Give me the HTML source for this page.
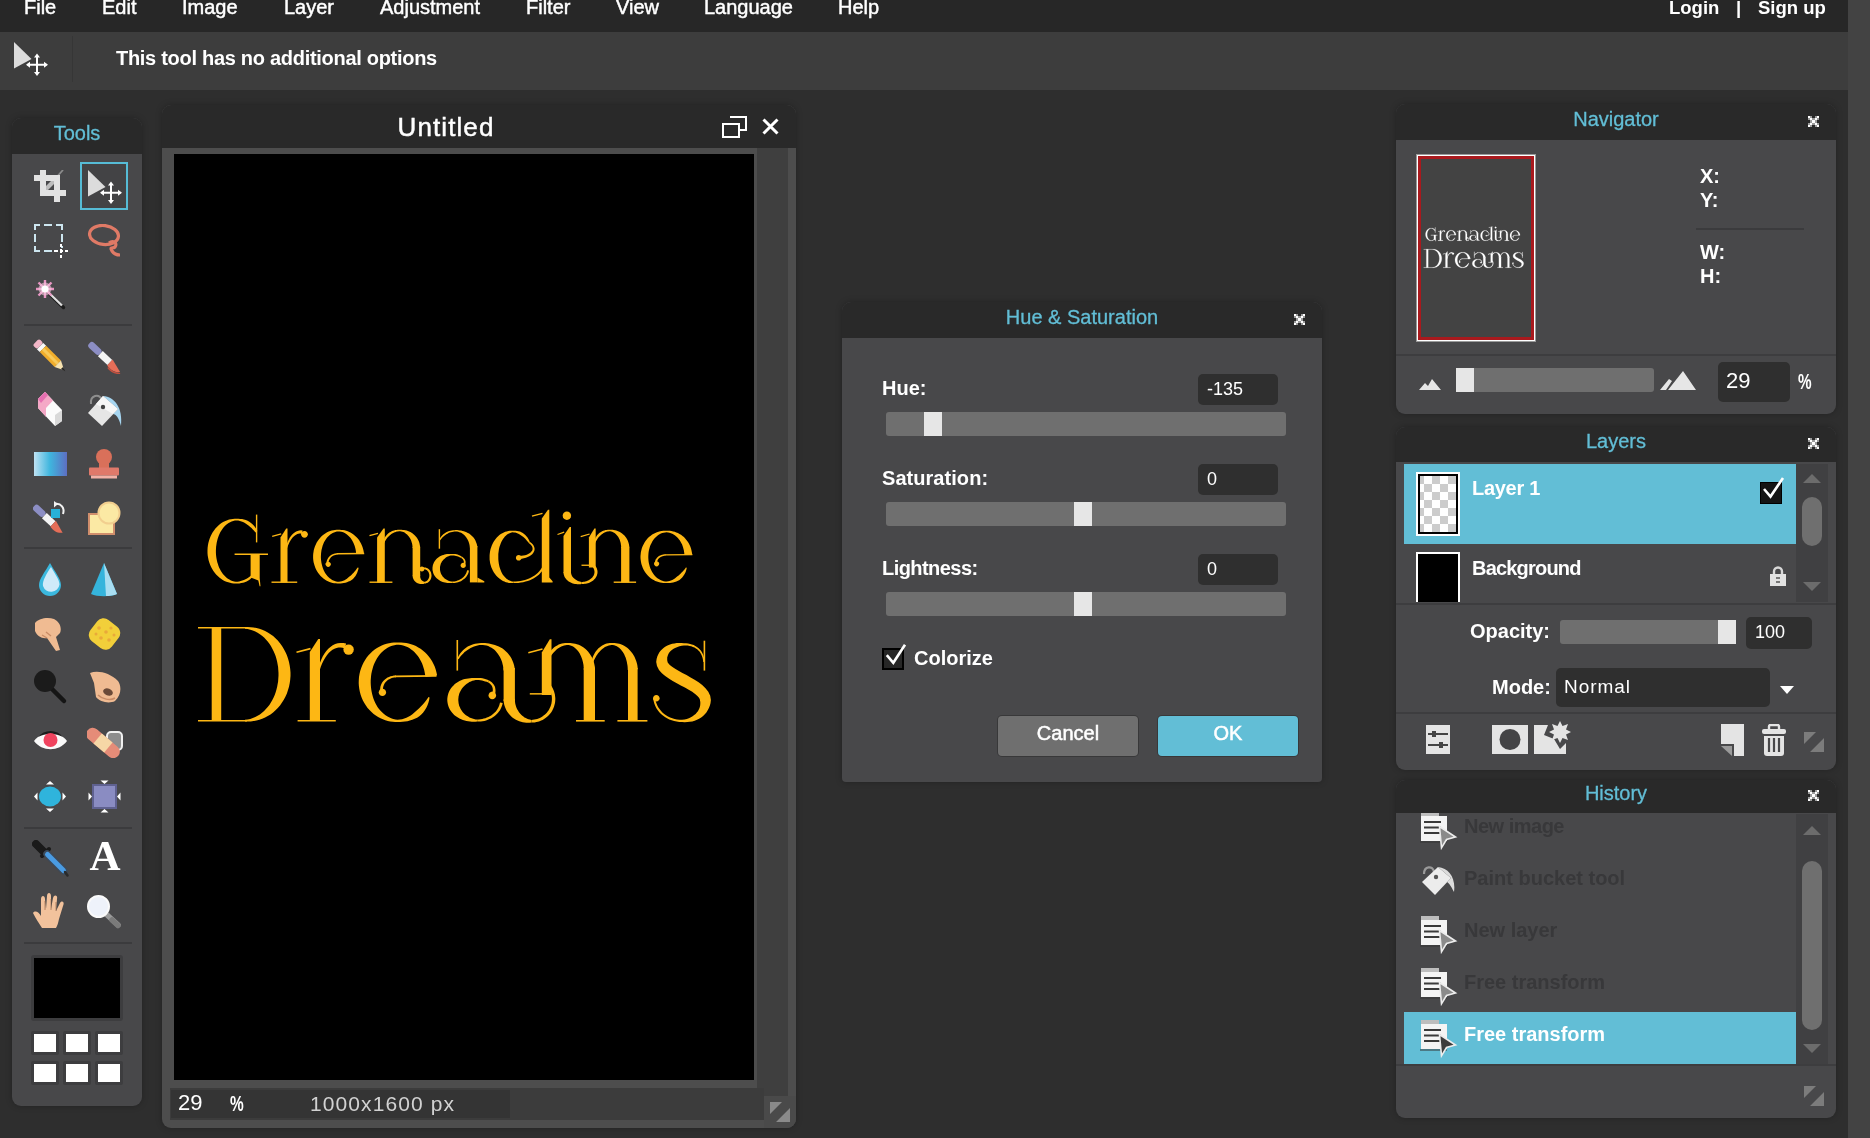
<!DOCTYPE html>
<html>
<head>
<meta charset="utf-8">
<title>Editor</title>
<style>
*{box-sizing:border-box;margin:0;padding:0}
html,body{width:1870px;height:1138px;overflow:hidden;background:#2e2e2e;font-family:"Liberation Sans",sans-serif;color:#fff}
#root{position:absolute;left:0;top:0;width:1870px;height:1138px;will-change:transform;transform:translateZ(0)}
.abs{position:absolute}
#menubar{position:absolute;left:0;top:0;width:1848px;height:32px;background:#272727}
#menubar span{position:absolute;top:-4px;font-size:20px;line-height:22px;color:#fff;white-space:nowrap;-webkit-text-stroke:0.45px #fff}
#rightstrip{position:absolute;left:1848px;top:0;width:22px;height:1138px;background:#434343}
#optbar{position:absolute;left:0;top:32px;width:1848px;height:58px;background:#3d3d3d}
.b{font-weight:bold}
.panel{position:absolute;background:#48484a;border-radius:9px;overflow:hidden;box-shadow:0 0 6px rgba(0,0,0,.25)}
.phead{position:absolute;left:0;top:0;width:100%;background:#292929;color:#62bed6;text-align:center;font-size:20px;-webkit-text-stroke:0.3px currentColor}
.x{position:absolute;width:11px;height:11px}
.track{position:absolute;background:#6f6f6f;border-radius:3px}
.thumb{position:absolute;background:#e6e6e6}
.inp{position:absolute;background:#2f2f2f;border-radius:5px;color:#fff;font-size:18px}
.lbl{position:absolute;font-weight:bold;font-size:19px;color:#fff;white-space:nowrap}
.btn{-webkit-text-stroke:0.5px #fff;box-shadow:0 0 0 1px rgba(0,0,0,.22)}
#canvas svg{fill:#fdb714}
</style>
</head>
<body>
<div id="root">
<div id="menubar">
<span style="left:24px">File</span>
<span style="left:102px">Edit</span>
<span style="left:182px">Image</span>
<span style="left:284px">Layer</span>
<span style="left:380px">Adjustment</span>
<span style="left:526px">Filter</span>
<span style="left:616px">View</span>
<span style="left:704px">Language</span>
<span style="left:838px">Help</span>
<span style="left:1669px;top:-3px;font-size:18.5px;-webkit-text-stroke:0" class="b">Login</span>
<span style="left:1736px;top:-3px;font-size:18.5px;-webkit-text-stroke:0" class="b">|</span>
<span style="left:1758px;top:-3px;font-size:18.5px;-webkit-text-stroke:0" class="b">Sign up</span>
</div>
<div id="rightstrip"></div>
<div id="optbar">
<div class="abs" style="left:72px;top:4px;width:1px;height:46px;background:#363636"></div>
<svg class="abs" style="left:14px;top:10px" width="36" height="36" viewBox="0 0 36 36" ><path d="M0 0V26.500L17.500 17Z" fill="#dcdcdc"/><path d="M23 13.500V32M13.500 22.800H32.500" stroke="#fff" stroke-width="2"/><path d="M23 11.500L26 15.500H20ZM23 34L26 30H20ZM12 22.800L16 19.800V25.800ZM34 22.800L30 19.800V25.800Z" fill="#fff"/></svg>

<div class="lbl" style="left:116px;top:15px;font-size:20px;letter-spacing:-0.29px">This tool has no additional options</div>
</div>

<!-- TOOLS -->
<div class="panel" id="tools" style="left:12px;top:118px;width:130px;height:988px">
<div class="phead" style="height:36px;line-height:30px;padding-top:0">Tools</div>
<svg class="abs" style="left:22px;top:52px" width="32" height="32" viewBox="0 0 32 32" ><path d="M29 0L13 18" stroke="#8c8c8c" stroke-width="1.800"/><path d="M0 5H6V0H12V5H26V20H32V26H26V32H20V26H6V11H0Z M12 11V20H20V11Z" fill="#e2e2e2" fill-rule="evenodd"/><path d="M12 16L17 11H20V14L14 20H12Z" fill="#bdbdbd"/></svg>
<div class="abs" style="left:68px;top:44px;width:48px;height:48px;border:2px solid #56bcd6;background:#434345"></div>
<svg class="abs" style="left:76px;top:52px" width="36" height="36" viewBox="0 0 36 36" ><path d="M0 0V26.500L17.500 17Z" fill="#dcdcdc"/><path d="M23 13.500V32M13.500 22.800H32.500" stroke="#fff" stroke-width="2"/><path d="M23 11.500L26 15.500H20ZM23 34L26 30H20ZM12 22.800L16 19.800V25.800ZM34 22.800L30 19.800V25.800Z" fill="#fff"/></svg>
<svg class="abs" style="left:22px;top:106px" width="36" height="36" viewBox="0 0 36 36" ><path d="M1 6V1H6M10 1H18M22 1H28V6M1 10V18M28 10V18M1 22V27H6M10 27H18M28 22V24" fill="none" stroke="#cde6f0" stroke-width="2"/><path d="M20 27H24M26 27H29M31 27H34M27 20V23M27 25V29M27 31V34" stroke="#fff" stroke-width="2"/></svg>
<svg class="abs" style="left:76px;top:106px" width="34" height="34" viewBox="0 0 34 34" ><ellipse cx="16" cy="11" rx="14.500" ry="9.500" fill="none" stroke="#e07a66" stroke-width="3.200" transform="rotate(6 16 11)"/><path d="M21 19C25 16 30 19 27 23C25 25 21 22 24 27C26 30 29 31 32 31" fill="none" stroke="#e07a66" stroke-width="3.200"/></svg>
<svg class="abs" style="left:22px;top:160px" width="34" height="34" viewBox="0 0 34 34" ><path d="M14 14.500L29.500 29.500" stroke="#1c1c1c" stroke-width="3.400" stroke-linecap="round"/><path d="M12.500 12.500L28 27.500" stroke="#dedede" stroke-width="2.400"/><path d="M11 2V20M2 11H20M4.500 4.500L17.500 17.500M17.500 4.500L4.500 17.500" stroke="#e896c4" stroke-width="2.400"/><circle cx="11" cy="11" r="6.500" fill="#f6c6de" opacity=".6"/><circle cx="11" cy="11" r="3.600" fill="#fff"/></svg>
<svg class="abs" style="left:21px;top:221px" width="34" height="34" viewBox="0 0 34 34" ><g transform="rotate(45 17 17)"><rect x="-3" y="12.500" width="6" height="9" rx="2" fill="#f3b7c8"/><rect x="3" y="12.500" width="4" height="9" fill="#fafafa"/><rect x="7" y="12.500" width="21" height="9" fill="#f0ad2c"/><rect x="7" y="15.500" width="21" height="3" fill="#f7c95a"/><path d="M28 12.500L37 17L28 21.500Z" fill="#f7e3b0"/><path d="M34 15.500L38.500 17L34 18.500Z" fill="#222"/></g></svg>
<svg class="abs" style="left:75px;top:222px" width="34" height="34" viewBox="0 0 34 34" ><g transform="rotate(43 17 17)"><rect x="-3" y="13.500" width="15" height="7" rx="3" fill="#8c8ec4"/><rect x="12" y="13.500" width="13" height="7" fill="#f4f4f4"/><path d="M25 13L39 17C36 21 30 22 25 21Z" fill="#e66e58"/><path d="M27 22C32 23 37 21 40 18" stroke="#c3503f" stroke-width="1.500" fill="none"/></g></svg>
<svg class="abs" style="left:24px;top:273px" width="30" height="36" viewBox="0 0 30 36" ><path d="M2 8L9 1L26 19V30L19 35L2 17Z" fill="#fbfbfb"/><path d="M2 8L9 1L17 9.500L10 17L10 26L2 17Z" fill="#f4a8c6"/><path d="M2 8L9 1L12 4L5 12Z" fill="#e56fb0"/><path d="M19 35V24L26 19V30Z" fill="#d9d9d9"/></svg>
<svg class="abs" style="left:74px;top:274px" width="38" height="36" viewBox="0 0 38 36" ><path d="M5 12C4 3 13 1 16 8" stroke="#8e8e8e" stroke-width="2" fill="none"/><path d="M2 21L17 4L32 17L16 34Z" fill="#e6e6e6"/><path d="M17 4C29 5 37 16 35 34C33 26 30 22 27 22L32 17Z" fill="#a6d5f0"/><path d="M17 4L32 17L27 22L10 12Z" fill="#f7f7f7"/><circle cx="17" cy="15" r="2.200" fill="#444"/></svg>
<div class="abs" style="left:22px;top:334px;width:33px;height:24px;background:linear-gradient(90deg,#bfe2f3 0%,#3fb6de 48%,#5d6ec2 100%)"></div>
<svg class="abs" style="left:77px;top:331px" width="30" height="30" viewBox="0 0 30 30" ><ellipse cx="15" cy="8" rx="8" ry="8" fill="#d9705a"/><rect x="10" y="8" width="10" height="12" fill="#d9705a"/><rect x="0" y="18.500" width="30" height="8" rx="1" fill="#e0796a"/><rect x="2" y="26.500" width="26" height="3" fill="#f3b1a6"/></svg>
<svg class="abs" style="left:21px;top:383px" width="36" height="34" viewBox="0 0 36 34" ><g transform="translate(0 3) rotate(43 15 15)"><rect x="-4" y="11.500" width="14" height="7" rx="3" fill="#8c8ec4"/><rect x="10" y="11.500" width="12" height="7" fill="#f4f4f4"/><path d="M22 11L35 15C32 19 27 20 22 19Z" fill="#e66e58"/></g><rect x="18" y="8" width="9" height="9" fill="#27b1d8"/><path d="M22 3C28 2 32 7 30 13" stroke="#f2f2f2" stroke-width="2" fill="none"/><path d="M21 0L25 3L21 6.500Z" fill="#f2f2f2"/></svg>
<svg class="abs" style="left:76px;top:383px" width="33" height="34" viewBox="0 0 33 34" ><rect x="1" y="13" width="25" height="20" fill="#fbe9a4" stroke="#d08e6c" stroke-width="2"/><circle cx="21" cy="12" r="10.500" fill="#fbe9a4" stroke="#f2cf8f" stroke-width="2"/></svg>
<svg class="abs" style="left:26px;top:445px" width="24" height="34" viewBox="0 0 24 34" ><path d="M12 0C17 9 23 16 23 22A11 11 0 0 1 1 22C1 16 7 9 12 0Z" fill="#3bb8de"/><path d="M13 4C17 11 21.500 17 21.500 21.500A8.500 8.500 0 0 1 5 23C4 18 9 10 13 4Z" fill="#cfeaf9"/></svg>
<svg class="abs" style="left:79px;top:445px" width="26" height="34" viewBox="0 0 26 34" ><path d="M13 0L26 31C20 34 6 34 0 31Z" fill="#35b4dc"/><path d="M13 0L26 31C23 32.500 18 33 15 33Z" fill="#a9def2"/></svg>
<svg class="abs" style="left:22px;top:499px" width="28" height="35" viewBox="0 0 28 35" ><path d="M1 6C5 1 14 0 20 2C26 5 28 11 26 16L22 20L26 33L22 34L13 21C8 22 3 19 1 14Z" fill="#f0bb92"/><path d="M8 18L13 21M12 15L17 19" stroke="#c98c66" stroke-width="1.400"/></svg>
<svg class="abs" style="left:74px;top:498px" width="37" height="36" viewBox="0 0 37 36" ><rect x="5" y="4.500" width="27" height="27" rx="8" fill="#f2cf3a" transform="rotate(38 18.500 18)"/><g fill="#e9a93a"><circle cx="13" cy="12" r="1.800"/><circle cx="20" cy="16" r="1.800"/><circle cx="25" cy="12" r="1.600"/><circle cx="15" cy="22" r="1.800"/><circle cx="23" cy="24" r="1.800"/><circle cx="28" cy="19" r="1.500"/><circle cx="10" cy="18" r="1.500"/></g></svg>
<svg class="abs" style="left:22px;top:552px" width="34" height="35" viewBox="0 0 34 35" ><path d="M17 18L30 31" stroke="#151515" stroke-width="4.500" stroke-linecap="round"/><circle cx="11" cy="11" r="11" fill="#1b1b1b"/></svg>
<svg class="abs" style="left:78px;top:553px" width="32" height="33" viewBox="0 0 32 33" ><path d="M0 2C8 -1 20 2 28 10C32 16 31 24 25 30C19 33 10 31 6 26L4 12Z" fill="#f0bb92"/><ellipse cx="18" cy="21" rx="5" ry="3.500" fill="#6b4a38" transform="rotate(20 18 21)"/><path d="M8 24C12 28 20 30 25 27" stroke="#c98c66" stroke-width="1.500" fill="none"/></svg>
<svg class="abs" style="left:22px;top:611px" width="33" height="23" viewBox="0 0 33 23" ><path d="M0 12C8 1 25 1 33 12C25 23 8 23 0 12Z" fill="#fafafa"/><path d="M4 8C10 0 23 0 29 8C22 4 11 4 4 8Z" fill="#1c1c1c"/><circle cx="16.500" cy="11" r="7" fill="#f0435e"/></svg>
<svg class="abs" style="left:75px;top:609px" width="36" height="31" viewBox="0 0 36 31" ><rect x="20" y="5" width="15" height="18" rx="4" fill="#8d8d8d" stroke="#f0f0f0" stroke-width="2"/><g transform="rotate(40 16 16)"><rect x="-4" y="9.500" width="40" height="13" rx="6.500" fill="#e58c78"/><rect x="9" y="9.500" width="14" height="13" fill="#f6d7a6"/></g></svg>
<svg class="abs" style="left:22px;top:663px" width="32" height="31" viewBox="0 0 32 31" ><ellipse cx="16" cy="15.500" rx="11" ry="10" fill="#2fb4dc"/><path d="M16 0L20 3.500H12ZM16 31L20 27.500H12ZM0 15.500L3.500 11.500V19.500ZM32 15.500L28.500 11.500V19.500Z" fill="#fff"/></svg>
<svg class="abs" style="left:76px;top:662px" width="33" height="33" viewBox="0 0 33 33" ><rect x="5" y="5" width="23" height="23" fill="#8a8cc2" stroke="#5f6190" stroke-width="2"/><path d="M16.500 4L20.500 0.500H12.500ZM16.500 29L20.500 32.500H12.500ZM4 16.500L0.500 12.500V20.500ZM29 16.500L32.500 12.500V20.500Z" fill="#fff"/></svg>
<svg class="abs" style="left:20px;top:722px" width="38" height="38" viewBox="0 0 38 38" ><path d="M4 4L13 13" stroke="#1a1a1a" stroke-width="8" stroke-linecap="round"/><path d="M10 16L17 9" stroke="#1a1a1a" stroke-width="4" stroke-linecap="round"/><path d="M15 14L32 31" stroke="#3c4a5a" stroke-width="7.500" stroke-linecap="round"/><path d="M15.500 14.500L31.500 30.500" stroke="#4a9be2" stroke-width="5" stroke-linecap="round"/><path d="M33 32L35.500 35.500" stroke="#2a2a2a" stroke-width="2.500" stroke-linecap="round"/></svg>
<div class="abs" style="left:77px;top:718px;width:32px;height:40px;font-family:'Liberation Serif',serif;font-weight:bold;font-size:43px;line-height:40px;color:#fff;text-align:center">A</div>
<svg class="abs" style="left:21px;top:775px" width="34" height="36" viewBox="0 0 34 36" ><path d="M9 35C6 30 3 26 0 20C2 17 6 19 8 23L8 6C8 2 12 2 12 6L13 16L14 3C14 -1 18 -1 18 3L18 16L20 5C21 1 25 2 24 6L23 18L27 10C29 7 32 9 30 13L26 26C25 31 24 33 23 35Z" fill="#f2c29c"/><path d="M12 8V17M18 6V17M23 9V18" stroke="#8a5a3e" stroke-width="1" opacity=".6"/></svg>
<svg class="abs" style="left:75px;top:777px" width="35" height="34" viewBox="0 0 35 34" ><path d="M19 19L31 30" stroke="#9a9a9a" stroke-width="5.500" stroke-linecap="round"/><path d="M25 25L31 30.500" stroke="#7a7a7a" stroke-width="5.500" stroke-linecap="round"/><circle cx="11.500" cy="11.500" r="10.500" fill="#eef2fa" stroke="#fafafa" stroke-width="2"/></svg>
<div class="abs" style="left:12px;top:206px;width:108px;height:2px;background:#3b3b3d"></div>
<div class="abs" style="left:12px;top:429px;width:108px;height:2px;background:#3b3b3d"></div>
<div class="abs" style="left:12px;top:709px;width:108px;height:2px;background:#3b3b3d"></div>
<div class="abs" style="left:12px;top:824px;width:108px;height:2px;background:#3b3b3d"></div>
<div class="abs" style="left:19px;top:837px;width:92px;height:66px;background:#000;border:3px solid #3d3d3f;border-radius:3px"></div>
<div class="abs" style="left:19px;top:913px;width:28px;height:24px;background:#fff;border:3px solid #3d3d3f;border-radius:2px"></div>
<div class="abs" style="left:51px;top:913px;width:28px;height:24px;background:#fff;border:3px solid #3d3d3f;border-radius:2px"></div>
<div class="abs" style="left:83px;top:913px;width:28px;height:24px;background:#fff;border:3px solid #3d3d3f;border-radius:2px"></div>
<div class="abs" style="left:19px;top:943px;width:28px;height:24px;background:#fff;border:3px solid #3d3d3f;border-radius:2px"></div>
<div class="abs" style="left:51px;top:943px;width:28px;height:24px;background:#fff;border:3px solid #3d3d3f;border-radius:2px"></div>
<div class="abs" style="left:83px;top:943px;width:28px;height:24px;background:#fff;border:3px solid #3d3d3f;border-radius:2px"></div>
</div>

<!-- CANVAS WINDOW -->
<div class="panel" id="win" style="left:162px;top:105px;width:634px;height:1023px;background:#4d4d4d">
<div class="phead" style="height:43px;line-height:43px;color:#fff;font-size:26px;letter-spacing:1.1px;padding-right:66px;padding-top:1px;-webkit-text-stroke:0.45px #fff">Untitled</div>
<svg class="abs" style="left:560px;top:11px" width="25" height="22" viewBox="0 0 25 22"><path d="M8 1H24V14H18" fill="none" stroke="#fff" stroke-width="2"/><rect x="1" y="8" width="16" height="13" fill="none" stroke="#fff" stroke-width="2"/></svg>
<svg class="abs" style="left:600px;top:13px" width="17" height="17" viewBox="0 0 17 17"><path d="M1.500 1.500L15.500 15.500M15.500 1.500L1.500 15.500" stroke="#fff" stroke-width="3"/></svg>
<div class="abs" style="left:595px;top:43px;width:31px;height:948px;background:#3f3f3f"></div>
<div class="abs" id="canvas" style="left:12px;top:49px;width:580px;height:926px;background:#000;overflow:hidden">
<svg class="abs" style="left:0;top:0" width="580" height="926" viewBox="174 154 580 926"><g><path d="M257.4 531L256.4 529.2L255.3 527.4L254 525.8L252.5 524.3L251 523L249.3 521.8L247.6 520.8L245.8 520.1L243.9 519.5L242.1 519.1L240.2 518.9L238.4 518.8L236.5 518.8L234.7 518.8L232.8 518.9L231 519.2L229.1 519.6L227.3 520.2L225.4 520.9L223.6 521.8L221.8 522.8L220.1 524L218.4 525.4L216.9 526.9L215.4 528.6L214 530.4L212.7 532.3L211.6 534.3L210.5 536.4L209.7 538.6L208.9 540.9L208.3 543.2L207.9 545.6L207.6 548.1L207.5 550.5L207.5 553L207.7 555.4L208.1 557.8L208.6 560.2L209.3 562.5L210.1 564.7L211.1 566.9L212.2 569L213.4 570.9L214.7 572.8L216.1 574.5L217.7 576.1L219.3 577.5L221 578.8L222.7 579.9L224.5 580.9L226.4 581.7L228.2 582.3L230.1 582.8L231.9 583.2L233.8 583.4L235.6 583.4L237.5 583.4L239.3 583.4L241.2 583.1L243 582.8L244.8 582.2L246.6 581.4L248.3 580.5L249.9 579.4L251.4 578.1L252.8 576.7L254.1 575.1L252.8 573.9L251.4 575.2L249.9 576.4L248.5 577.4L247 578.4L245.5 579.3L243.9 580L242.3 580.6L240.7 581.1L239.1 581.5L237.4 581.7L235.7 581.7L234.1 581.5L232.4 581L230.9 580.4L229.4 579.6L227.9 578.7L226.6 577.7L225.3 576.5L224.1 575.3L222.9 573.9L221.9 572.5L220.9 570.9L220 569.3L219.2 567.7L218.5 565.9L217.9 564.1L217.3 562.3L216.9 560.4L216.5 558.5L216.2 556.5L216 554.6L215.9 552.6L215.9 550.6L216 548.6L216.1 546.7L216.4 544.7L216.7 542.8L217.1 540.9L217.6 539L218.2 537.2L218.8 535.4L219.6 533.7L220.4 532.1L221.4 530.5L222.4 529L223.5 527.6L224.6 526.3L225.9 525.1L227.2 524L228.6 523L230.1 522.2L231.6 521.5L233.2 521L234.9 520.6L236.5 520.4L238.2 520.5L239.9 520.9L241.5 521.4L243 522L244.5 522.8L246 523.7L247.4 524.7L248.8 525.7L250.2 526.9L251.5 528.1L252.8 529.4L254.1 530.8L255.4 532.4Z"/><path d="M255.9 514.6L255.9 542.4L257.3 542.4L257.3 514.6Z"/><path d="M250.6 554L259.7 554L259.7 578L260.5 586.2L259.6 586.2L258.3 580.5L250.6 577.5Z"/><path d="M234.6 555L268 555L268 553.5L234.6 553.5Z"/><path d="M280.5 537.5L286.2 528.5L287.5 528.5L287.5 582.4L280.5 582.4Z"/><path d="M272.4 536.9L281.4 534.4L281 533.2L272 535.7Z"/><path d="M271.5 582.9L297.2 582.9L297.2 581.5L271.5 581.5Z"/><path d="M286.1 552.1L286.6 549.9L287.2 547.8L287.9 545.8L288.7 543.9L289.6 542.1L290.5 540.5L291.5 539L292.6 537.6L293.7 536.4L294.9 535.5L296.1 534.7L297.3 534.1L298.4 533.7L299.6 533.6L300.7 533.6L302 533.9L302.6 530.5L301 530.3L299.2 530.5L297.6 530.9L296.1 531.5L294.6 532.4L293.3 533.5L292 534.7L290.8 536.2L289.7 537.7L288.8 539.5L287.9 541.3L287.1 543.2L286.4 545.3L285.8 547.4L285.3 549.6L284.9 551.9Z"/><path d="M307.9 534.3L307.6 535.6L306.9 536.7L305.8 537.4L304.5 537.7L303.2 537.4L302.1 536.7L301.4 535.6L301.1 534.3L301.4 533L302.1 531.9L303.2 531.2L304.5 530.9L305.8 531.2L306.9 531.9L307.6 533Z"/><path d="M363.9 552.9L363.6 551L363.1 549.1L362.5 547.1L361.8 545.3L361 543.5L360 541.8L359 540.1L357.8 538.6L356.6 537.2L355.2 535.9L353.8 534.7L352.4 533.7L350.9 532.7L349.3 531.9L347.7 531.3L346.2 530.7L344.6 530.3L343 530L341.4 529.9L339.8 529.8L338.2 529.8L336.6 529.8L335 529.9L333.4 530.2L331.8 530.5L330.2 531L328.7 531.6L327.1 532.3L325.6 533.2L324.1 534.2L322.7 535.3L321.3 536.5L320 537.9L318.8 539.4L317.7 540.9L316.7 542.6L315.8 544.4L315 546.2L314.4 548.1L313.8 550L313.5 552L313.2 554.1L313.1 556.1L313.1 558.1L313.3 560.2L313.6 562.2L314.1 564.1L314.7 566.1L315.4 567.9L316.2 569.7L317.2 571.4L318.2 573.1L319.4 574.6L320.6 576L322 577.3L323.4 578.5L324.8 579.5L326.3 580.5L327.9 581.3L329.5 581.9L331 582.5L332.6 582.9L334.2 583.2L335.8 583.3L337.4 583.4L339 583.4L340.6 583.4L342.2 583.3L343.8 583L345.4 582.7L347 582.2L348.5 581.6L350.1 580.9L351.6 580L353 578.9L354.2 577.6L355.3 576.2L356.3 574.6L357.1 573L357.7 571.3L358.3 569.6L358.6 567.8L357.7 567.4L356.7 568.8L355.7 570.2L354.6 571.5L353.6 572.7L352.5 573.8L351.4 574.9L350.2 575.9L349.1 576.8L348 577.8L346.9 578.7L345.7 579.5L344.5 580.3L343.2 580.8L341.8 581.3L340.4 581.6L339 581.8L337.5 581.7L336.1 581.5L334.7 581.1L333.4 580.6L332.1 579.9L330.9 579.1L329.7 578.3L328.6 577.3L327.6 576.3L326.6 575.1L325.8 573.9L325 572.7L324.2 571.3L323.6 570L323 568.5L322.5 567.1L322.1 565.6L321.7 564.1L321.4 562.5L321.2 561L321 559.4L320.9 557.8L320.9 556.2L321 554.6L321.1 553L321.3 551.5L321.5 549.9L321.9 548.4L322.3 546.9L322.7 545.4L323.3 543.9L323.9 542.6L324.6 541.2L325.4 539.9L326.2 538.7L327.1 537.5L328.1 536.4L329.2 535.4L330.3 534.5L331.5 533.7L332.7 532.9L334 532.4L335.4 531.9L336.8 531.6L338.2 531.4L339.7 531.5L341.1 531.7L342.5 532.1L343.8 532.6L345.1 533.3L346.3 534.1L347.5 534.9L348.6 535.9L349.6 536.9L350.6 538.1L351.4 539.3L352.2 540.5L353 541.9L353.6 543.2L354.2 544.7L354.7 546.1L355.1 547.6L355.5 549.1L355.8 550.7L356 552.2L356.2 553.9Z"/><path d="M364.2 552.8L337 553.1L337 554.5L364.2 554.2Z"/><path d="M337.4 553.1L336.2 553.2L335 553.4L333.9 553.8L332.8 554.2L331.9 554.6L330.9 555.2L330.1 555.8L329.4 556.5L328.7 557.2L328.1 558L327.6 558.9L327.2 559.7L326.9 560.6L326.6 561.5L326.5 562.4L326.5 563.3L328.7 563.3L328.7 562.5L328.7 561.8L328.8 561.1L329 560.4L329.3 559.7L329.7 559L330.1 558.4L330.6 557.7L331.2 557.1L331.9 556.6L332.7 556.1L333.5 555.6L334.4 555.2L335.4 554.9L336.4 554.7L337.6 554.5Z"/><path d="M330.8 564.3L330.6 565.3L330 566.1L329.2 566.7L328.2 566.9L327.2 566.7L326.4 566.1L325.8 565.3L325.6 564.3L325.8 563.3L326.4 562.5L327.2 561.9L328.2 561.7L329.2 561.9L330 562.5L330.6 563.3Z"/><path d="M377.1 537.5L383.5 528.5L384.8 528.5L384.8 582.4L377.1 582.4Z"/><path d="M369.7 536.2L378.2 534L377.8 532.8L369.3 535Z"/><path d="M369.5 582.9L392.4 582.9L392.4 581.5L369.5 581.5Z"/><path d="M383.5 544.9L383.9 543.7L384.4 542.6L384.9 541.5L385.5 540.5L386.1 539.5L386.8 538.5L387.5 537.6L388.3 536.8L389.1 535.9L389.9 535.2L390.8 534.5L391.7 533.8L392.7 533.3L393.7 532.7L394.7 532.3L395.8 531.9L396.8 531.6L397.9 531.4L399.1 531.2L400.2 531.3L401.3 531.5L402.4 531.7L403.5 532.1L404.5 532.6L405.4 533.2L406.3 533.9L407.1 534.6L407.9 535.4L408.6 536.2L409.2 537L409.8 537.9L410.3 538.8L410.8 539.8L411.2 540.8L411.5 541.7L411.8 542.7L412.1 543.7L412.3 544.7L412.4 545.7L412.5 546.7L412.6 547.9L420.2 547.2L420 545.9L419.7 544.4L419.4 542.9L418.9 541.5L418.2 540.1L417.5 538.8L416.7 537.6L415.8 536.5L414.9 535.4L413.8 534.4L412.7 533.5L411.6 532.7L410.4 532L409.1 531.4L407.9 530.9L406.6 530.5L405.3 530.2L404 530L402.8 529.9L401.5 529.8L400.3 529.8L399 529.8L397.8 529.8L396.5 529.9L395.3 530.1L394.1 530.4L392.9 530.8L391.7 531.3L390.5 531.9L389.4 532.6L388.4 533.3L387.4 534.2L386.5 535.2L385.7 536.2L384.9 537.3L384.3 538.4L383.7 539.6L383.3 540.8L382.9 542.1L382.6 543.4L382.4 544.6Z"/><path d="M412.6 547L420.2 547L420.2 576L412.6 576Z"/><path d="M412.6 575.6L412.6 576.3L412.8 577.1L412.9 577.9L413.2 578.6L413.5 579.3L413.9 580L414.4 580.7L414.9 581.2L415.4 581.8L416 582.3L416.6 582.7L417.3 583L418 583.4L418.6 583.6L419.3 583.8L420 583.9L420.7 584L421.4 584L422.1 584L422.7 584L423.4 583.9L424 583.8L424 581.6L423.5 581.5L423.1 581.3L422.7 581L422.3 580.8L422 580.5L421.7 580.2L421.4 579.9L421.1 579.5L420.9 579.2L420.8 578.8L420.6 578.5L420.5 578.2L420.4 577.9L420.3 577.5L420.3 577.2L420.2 577L420.2 576.7L420.2 576.4L420.2 576.2L420.2 576L420.2 575.7L420.2 575.4Z"/><path d="M424 583.6L424.5 583.6L425.1 583.5L425.6 583.5L426.1 583.3L426.6 583.1L427.1 582.9L427.6 582.7L428 582.4L428.5 582.1L428.9 581.7L429.3 581.3L429.6 580.9L430 580.4L430.3 580L430.6 579.5L430.8 579L431 578.4L431.2 577.9L431.3 577.3L431.4 576.7L431.5 576.2L431.5 575.6L431.5 575L431.4 574.4L431.3 573.9L431.2 573.3L431.1 572.7L430.9 572.2L430.6 571.7L430.4 571.2L430.1 570.7L429.7 570.2L429.4 569.8L429 569.4L428.6 569L428.2 568.7L427.7 568.4L427.2 568.1L426.7 567.9L426.2 567.7L425.7 567.6L425.2 567.5L424.7 567.4L424.2 567.4L423.6 567.4L423.1 567.4L422.6 567.5L422.1 567.6L422.6 569.5L423 569.3L423.4 569.3L423.7 569.2L424.1 569.2L424.5 569.2L424.9 569.3L425.2 569.4L425.6 569.5L426 569.7L426.3 569.9L426.6 570.1L426.9 570.3L427.3 570.6L427.5 570.9L427.8 571.2L428.1 571.5L428.3 571.8L428.5 572.2L428.7 572.6L428.8 573L429 573.4L429.1 573.8L429.2 574.3L429.3 574.7L429.3 575.1L429.3 575.6L429.3 576L429.2 576.4L429.2 576.9L429.1 577.3L428.9 577.7L428.8 578.1L428.6 578.5L428.4 578.9L428.2 579.3L428 579.6L427.7 579.9L427.5 580.2L427.2 580.5L426.9 580.8L426.5 581L426.2 581.2L425.8 581.4L425.5 581.5L425.1 581.6L424.8 581.7L424.4 581.8L424 581.8Z"/><path d="M424.4 569L424.2 570L423.7 570.8L422.9 571.3L421.9 571.5L420.9 571.3L420.1 570.8L419.6 570L419.4 569L419.6 568L420.1 567.2L420.9 566.7L421.9 566.5L422.9 566.7L423.7 567.2L424.2 568Z"/><path d="M438.7 529.2L438.7 548.7L440.1 548.7L440.1 529.2Z"/><path d="M440.2 540.2L441 539.2L441.8 538.2L442.6 537.3L443.5 536.5L444.4 535.7L445.4 534.9L446.4 534.3L447.5 533.7L448.6 533.1L449.7 532.6L450.9 532.2L452.1 531.9L453.3 531.7L454.5 531.5L455.8 531.5L457 531.6L458.2 531.8L459.4 532.2L460.5 532.6L461.6 533.1L462.6 533.8L463.6 534.5L464.5 535.3L465.3 536.2L466 537.1L466.6 538L467.3 539L467.8 539.9L468.3 540.9L468.7 541.9L469 542.9L469.3 543.9L469.5 544.9L469.7 545.9L469.9 547L469.9 548.1L477.4 547.3L477.2 545.9L476.9 544.4L476.4 542.9L475.8 541.5L475.2 540.1L474.4 538.8L473.5 537.6L472.5 536.5L471.4 535.4L470.3 534.4L469.1 533.6L467.8 532.9L466.5 532.3L465.2 531.7L463.8 531.3L462.5 530.9L461.1 530.6L459.8 530.4L458.5 530.2L457.1 530.1L455.8 530.1L454.4 530.2L453.1 530.2L451.8 530.4L450.5 530.7L449.2 531L447.9 531.5L446.7 532.1L445.5 532.7L444.4 533.5L443.3 534.3L442.3 535.2L441.4 536.2L440.6 537.3L439.9 538.4L439.3 539.6Z"/><path d="M469.9 546L477.4 546L477.4 582.4L469.9 582.4Z"/><path d="M477.4 577.5L484.3 581.2L484.3 582.4L477.4 582.4Z"/><path d="M461.7 556.6L460.8 556L459.8 555.4L458.7 554.9L457.6 554.6L456.5 554.3L455.3 554.1L454.1 554L452.9 554L451.8 554L450.6 553.9L449.4 553.9L448.2 554L447 554.1L445.8 554.3L444.6 554.5L443.4 554.9L442.2 555.3L441.1 555.7L440 556.3L438.9 557L437.9 557.7L436.9 558.5L436 559.4L435.2 560.4L434.5 561.4L433.9 562.6L433.4 563.7L432.9 564.9L432.7 566.2L432.5 567.5L432.5 568.7L432.5 570L432.8 571.3L433.1 572.5L433.5 573.7L434.1 574.9L434.8 576L435.5 577L436.4 577.9L437.3 578.8L438.3 579.6L439.3 580.3L440.4 580.9L441.5 581.4L442.7 581.9L443.8 582.3L445 582.6L446.2 582.8L447.4 583L448.6 583.1L449.8 583.1L451 583.1L452.2 583L452.2 581.6L451.1 581.4L450.1 581.2L449 580.9L448 580.5L447.1 580.1L446.2 579.6L445.4 579L444.6 578.4L443.9 577.7L443.2 577.1L442.6 576.4L442.1 575.6L441.7 574.9L441.3 574.2L440.9 573.5L440.7 572.7L440.4 572L440.3 571.3L440.1 570.6L440 570L440 569.3L440 568.6L440 568L440 567.3L440.1 566.6L440.2 565.9L440.4 565.2L440.6 564.5L440.8 563.8L441.1 563.1L441.5 562.4L441.9 561.6L442.4 560.9L443 560.2L443.6 559.5L444.3 558.9L445.1 558.2L445.9 557.6L446.7 557.1L447.7 556.6L448.6 556.2L449.7 555.8L450.7 555.6L451.8 555.5L452.9 555.5L454 555.6L455 555.8L456.1 556L457.1 556.3L458.1 556.6L459.1 557L460.1 557.4L461 557.8Z"/><path d="M452.2 583L453.4 583L454.6 582.9L455.8 582.8L456.9 582.5L458.1 582.2L459.2 581.8L460.3 581.4L461.3 580.9L462.3 580.3L463.2 579.6L464.1 578.9L465 578.2L465.7 577.4L466.5 576.5L467.1 575.6L467.6 574.7L468.1 573.7L468.5 572.7L468.8 571.6L469 570.6L467.1 570.2L466.9 571.2L466.6 572L466.3 572.9L465.9 573.7L465.4 574.6L464.9 575.4L464.3 576.1L463.6 576.9L462.9 577.5L462.1 578.2L461.3 578.8L460.4 579.3L459.5 579.8L458.5 580.3L457.5 580.6L456.5 580.9L455.5 581.2L454.4 581.4L453.3 581.5L452.2 581.6Z"/><path d="M461 557.8L461.6 558.2L462.1 558.7L462.6 559.1L462.9 559.5L463.2 560L463.5 560.4L463.6 560.8L463.8 561.2L463.8 561.7L463.8 562.1L463.8 562.5L463.7 562.9L463.6 563.3L463.5 563.7L463.2 564L462.9 564.5L464.7 565.5L465 565L465.2 564.4L465.4 563.8L465.6 563.2L465.6 562.6L465.6 562L465.6 561.4L465.4 560.8L465.2 560.2L464.9 559.6L464.6 559.1L464.1 558.5L463.6 558L463.1 557.5L462.5 557.1L461.8 556.6Z"/><path d="M465.8 565.4L465.6 566.4L465 567.2L464.2 567.8L463.2 568L462.2 567.8L461.4 567.2L460.8 566.4L460.6 565.4L460.8 564.4L461.4 563.6L462.2 563L463.2 562.8L464.2 563L465 563.6L465.6 564.4Z"/><path d="M541.8 518.5L548 509.7L549.3 509.7L549.3 577.5L552.6 581.2L552.6 582.4L541.8 582.4Z"/><path d="M532.2 516.8L542.7 513.9L542.3 512.7L531.8 515.6Z"/><path d="M529.8 542L529.2 540.4L528.4 538.9L527.5 537.5L526.4 536.2L525.3 535L524.1 533.9L522.8 533L521.4 532.2L520 531.6L518.5 531.2L517.1 530.9L515.6 530.7L514.1 530.7L512.7 530.7L511.2 530.7L509.7 530.8L508.3 531L506.7 531.4L505.2 531.8L503.8 532.5L502.3 533.2L500.8 534.1L499.4 535.1L498.1 536.3L496.8 537.5L495.6 538.9L494.5 540.5L493.5 542.1L492.6 543.8L491.8 545.6L491.1 547.4L490.5 549.3L490.1 551.3L489.8 553.3L489.6 555.3L489.6 557.3L489.6 559.4L489.9 561.4L490.2 563.4L490.7 565.3L491.3 567.2L492.1 569L492.9 570.8L493.9 572.4L495 574L496.1 575.5L497.3 576.8L498.7 578L500 579.1L501.4 580.1L502.9 580.9L504.4 581.6L505.9 582.2L507.4 582.6L508.9 582.9L510.4 583.1L511.8 583.1L513.3 583.1L513.3 581.5L512 581.4L510.8 581L509.5 580.6L508.4 580L507.3 579.3L506.2 578.5L505.3 577.6L504.4 576.6L503.5 575.5L502.7 574.4L502 573.2L501.4 571.9L500.8 570.6L500.3 569.2L499.8 567.8L499.4 566.4L499.1 564.9L498.8 563.4L498.6 561.9L498.4 560.3L498.3 558.8L498.3 557.2L498.3 555.7L498.3 554.1L498.5 552.6L498.7 551L498.9 549.5L499.2 548L499.6 546.6L500.1 545.2L500.6 543.8L501.1 542.4L501.7 541.2L502.4 539.9L503.2 538.8L504 537.7L504.9 536.6L505.8 535.7L506.8 534.8L507.9 534.1L509 533.5L510.2 532.9L511.5 532.6L512.7 532.3L514 532.4L515.3 532.6L516.6 533L517.8 533.4L518.9 534L520.1 534.7L521.2 535.4L522.3 536.2L523.4 537.1L524.5 538L525.5 539.1L526.5 540.2L527.6 541.4L528.5 542.7Z"/><path d="M513.3 583.1L515.9 583.1L518.4 582.9L520.8 582.6L523.2 582.2L525.5 581.6L527.7 581L529.9 580.2L531.9 579.2L533.9 578.2L535.7 577L537.5 575.8L539.1 574.4L540.6 572.8L542 571.2L543.3 569.4L544.4 567.6L542.6 566.4L541.5 568.2L540.3 569.9L539.1 571.4L537.7 572.9L536.2 574.2L534.6 575.4L532.9 576.5L531.1 577.6L529.1 578.4L527.1 579.2L525 579.9L522.8 580.5L520.6 580.9L518.2 581.2L515.8 581.4L513.3 581.5Z"/><path d="M528.7 542.9L530.3 544.2L531.4 545.4L532.1 546.6L532.5 547.7L532.6 548.7L532.5 549.7L532.1 550.7L531.4 551.6L530.6 552.5L529.5 553.3L528.2 554L526.8 554.7L525.1 555.2L523.3 555.6L521.5 555.8L519.4 555.9L519.6 558.9L521.8 558.7L523.9 558.3L525.9 557.8L527.7 557.1L529.4 556.3L530.9 555.3L532.2 554.2L533.2 553L534 551.6L534.5 550.2L534.6 548.7L534.3 547.2L533.7 545.7L532.7 544.3L531.4 543L529.7 541.7Z"/><path d="M521.5 557.8L521.3 558.9L520.7 559.8L519.8 560.4L518.7 560.6L517.6 560.4L516.7 559.8L516.1 558.9L515.9 557.8L516.1 556.7L516.7 555.8L517.6 555.2L518.7 555L519.8 555.2L520.7 555.8L521.3 556.7Z"/><path d="M571.1 515.7L570.8 517.3L569.9 518.7L568.5 519.6L566.9 519.9L565.3 519.6L563.9 518.7L563 517.3L562.7 515.7L563 514.1L563.9 512.7L565.3 511.8L566.9 511.5L568.5 511.8L569.9 512.7L570.8 514.1Z"/><path d="M563.5 536L569.6 527L571 527L571 573L563.5 573Z"/><path d="M557.7 535.1L564.4 532.8L564 531.6L557.3 533.9Z"/><path d="M563.5 572.2L563.5 573.1L563.7 574.3L564 575.3L564.4 576.4L564.9 577.4L565.5 578.3L566.2 579.2L567 580L567.8 580.8L568.7 581.4L569.7 582L570.7 582.6L571.7 583L572.8 583.4L573.9 583.7L575 583.9L576.1 584.1L577.2 584.2L578.3 584.2L579.4 584.2L580.5 584.2L581.6 584.1L581.6 581.9L580.6 581.8L579.7 581.5L578.8 581.3L577.9 580.9L577.1 580.5L576.3 580.1L575.5 579.6L574.9 579.1L574.2 578.6L573.7 578.1L573.1 577.5L572.7 577L572.3 576.4L572 575.9L571.7 575.3L571.5 574.8L571.3 574.3L571.2 573.8L571.1 573.3L571 572.9L571 572.4L570.9 571.8Z"/><path d="M581.6 584L582.7 584L583.7 584L584.8 583.8L585.8 583.7L586.8 583.5L587.8 583.2L588.8 582.9L589.8 582.5L590.7 582L591.6 581.5L592.4 581L593.2 580.4L593.9 579.8L594.6 579.1L595.2 578.4L595.8 577.6L596.2 576.8L596.7 576L597 575.1L597.2 574.2L597.4 573.4L597.5 572.5L597.5 571.5L597.4 570.6L597.2 569.8L597 568.9L596.7 568L596.2 567.2L595.8 566.4L595.2 565.7L592.9 567.3L593.3 568L593.7 568.6L593.9 569.2L594.2 569.8L594.3 570.4L594.4 571.1L594.5 571.7L594.5 572.3L594.4 572.9L594.3 573.6L594.2 574.2L593.9 574.8L593.7 575.4L593.3 576L592.9 576.6L592.5 577.2L592 577.8L591.4 578.3L590.8 578.8L590.1 579.3L589.4 579.8L588.7 580.2L587.9 580.6L587.1 580.9L586.2 581.2L585.3 581.5L584.4 581.7L583.5 581.8L582.5 581.9L581.6 582Z"/><path d="M588.9 537.5L594.4 528.4L595.7 528.4L595.7 567.5L588.9 567.5Z"/><path d="M580.9 537.2L589.8 534.6L589.4 533.4L580.5 536Z"/><path d="M581.5 565.9L589.2 565.9L589.2 564.6L581.5 564.6Z"/><path d="M594.6 544.9L595 543.7L595.4 542.6L595.9 541.5L596.5 540.4L597.1 539.5L597.7 538.5L598.4 537.6L599.1 536.8L599.9 536L600.7 535.2L601.5 534.5L602.3 533.9L603.2 533.3L604.1 532.8L605.1 532.3L606 531.9L607 531.6L608.1 531.4L609.1 531.2L610.1 531.3L611.2 531.5L612.2 531.8L613.1 532.2L614.1 532.7L614.9 533.3L615.7 534L616.4 534.7L617.1 535.4L617.7 536.2L618.3 537.1L618.8 538L619.3 538.9L619.7 539.8L620 540.8L620.3 541.8L620.6 542.7L620.8 543.7L620.9 544.7L621.1 545.7L621.1 546.7L621.2 547.9L629.4 547.2L629.2 545.9L629 544.4L628.6 542.9L628.1 541.5L627.5 540.1L626.8 538.8L626 537.6L625.2 536.4L624.2 535.3L623.2 534.4L622.1 533.5L621 532.7L619.9 532L618.7 531.4L617.5 530.9L616.2 530.5L615 530.2L613.8 530L612.6 529.8L611.4 529.8L610.2 529.8L609.1 529.8L607.9 529.8L606.7 529.9L605.5 530.1L604.4 530.4L603.2 530.8L602.1 531.3L601 531.9L600 532.6L599 533.3L598.1 534.2L597.2 535.1L596.5 536.2L595.8 537.3L595.2 538.4L594.6 539.6L594.2 540.8L593.9 542.1L593.7 543.4L593.5 544.6Z"/><path d="M621.1 547L629.4 547L629.4 582.4L621.1 582.4Z"/><path d="M613.7 582.9L636.1 582.9L636.1 581.5L613.7 581.5Z"/><path d="M692.2 554.3L691.9 552.4L691.5 550.4L691 548.5L690.3 546.6L689.5 544.8L688.6 543.1L687.6 541.4L686.4 539.9L685.2 538.5L683.9 537.1L682.5 535.9L681 534.8L679.5 533.9L677.9 533.1L676.3 532.4L674.7 531.8L673.1 531.4L671.5 531L669.8 530.8L668.2 530.7L666.6 530.7L665 530.7L663.4 530.8L661.7 531L660.1 531.3L658.5 531.7L656.9 532.2L655.3 532.9L653.7 533.7L652.2 534.6L650.7 535.7L649.3 536.8L647.9 538.1L646.7 539.5L645.5 541.1L644.4 542.7L643.5 544.4L642.6 546.2L641.9 548L641.4 549.9L640.9 551.9L640.7 553.9L640.5 555.9L640.5 557.9L640.7 560L641 561.9L641.4 563.9L642 565.8L642.7 567.7L643.5 569.5L644.5 571.2L645.5 572.8L646.7 574.3L648 575.7L649.3 577L650.7 578.2L652.2 579.2L653.7 580.1L655.3 580.9L656.9 581.6L658.5 582.1L660.2 582.5L661.8 582.8L663.4 583L665 583.1L666.6 583.1L668.3 583.1L669.9 583L671.5 582.8L673.1 582.4L674.8 582L676.4 581.4L678 580.7L679.5 579.9L680.9 578.8L682.2 577.5L683.3 576.1L684.3 574.6L685.2 573L685.9 571.3L686.4 569.6L686.8 567.8L685.9 567.4L684.9 568.9L683.8 570.2L682.7 571.4L681.6 572.6L680.5 573.7L679.4 574.7L678.3 575.7L677.1 576.6L676 577.6L674.8 578.5L673.6 579.3L672.3 580L670.9 580.6L669.5 581L668.1 581.3L666.6 581.5L665.1 581.4L663.7 581.2L662.3 580.7L660.9 580.2L659.6 579.5L658.3 578.8L657.1 577.9L656 576.9L655 575.9L654 574.7L653.1 573.5L652.3 572.3L651.6 571L650.9 569.6L650.3 568.2L649.8 566.8L649.4 565.3L649 563.8L648.7 562.3L648.5 560.8L648.4 559.2L648.3 557.7L648.3 556.2L648.4 554.6L648.5 553.1L648.7 551.5L649 550L649.4 548.5L649.8 547.1L650.3 545.6L650.9 544.2L651.6 542.9L652.3 541.6L653.1 540.3L654 539.1L654.9 538L656 536.9L657.1 535.9L658.3 535.1L659.5 534.3L660.9 533.6L662.2 533.1L663.6 532.7L665.1 532.4L666.6 532.3L668.1 532.4L669.5 532.7L670.9 533.2L672.3 533.8L673.6 534.5L674.8 535.3L676 536.2L677.1 537.2L678.1 538.2L679 539.4L679.9 540.6L680.7 541.9L681.4 543.2L682.1 544.6L682.6 546L683.1 547.4L683.5 548.9L683.9 550.4L684.1 551.9L684.3 553.4L684.5 555.1Z"/><path d="M692.4 553.9L665 554.2L665 555.6L692.4 555.3Z"/><path d="M665.4 554.2L664.3 554.3L663.2 554.5L662.2 554.7L661.2 555L660.2 555.4L659.4 555.8L658.6 556.3L657.8 556.9L657.2 557.5L656.6 558.2L656.1 558.9L655.6 559.6L655.3 560.4L655.1 561.2L654.9 562L654.9 562.8L657.1 562.8L657.1 562.2L657.1 561.6L657.3 561L657.5 560.4L657.7 559.9L658.1 559.3L658.5 558.8L659 558.3L659.6 557.8L660.2 557.3L661 556.9L661.7 556.5L662.6 556.2L663.5 555.9L664.5 555.7L665.6 555.6Z"/><path d="M659.2 563.8L659 564.8L658.4 565.6L657.6 566.2L656.6 566.4L655.6 566.2L654.8 565.6L654.2 564.8L654 563.8L654.2 562.8L654.8 562L655.6 561.4L656.6 561.2L657.6 561.4L658.4 562L659 562.8Z"/><path d="M211.7 627.4L221.2 627.4L221.2 721L211.7 721Z"/><path d="M198 628.6L247 628.6L247 627L198 627Z"/><path d="M198 721.6L247 721.6L247 720L198 720Z"/><path d="M245 628.8L247.7 629.1L250.3 629.7L252.8 630.5L255.3 631.6L257.6 632.8L259.9 634.2L262 635.8L264.1 637.6L265.9 639.5L267.7 641.6L269.4 643.7L270.9 646L272.2 648.4L273.5 650.9L274.6 653.4L275.6 656.1L276.4 658.8L277.1 661.5L277.6 664.3L278.1 667.1L278.3 670L278.5 672.9L278.5 675.7L278.3 678.6L278.1 681.5L277.6 684.3L277.1 687.1L276.4 689.8L275.6 692.5L274.6 695.2L273.5 697.7L272.2 700.2L270.9 702.6L269.4 704.9L267.7 707L265.9 709.1L264.1 711L262 712.8L259.9 714.4L257.6 715.8L255.3 717L252.8 718.1L250.3 718.9L247.7 719.5L245 719.8L245 721.4L247.8 721.5L250.7 721.4L253.6 721.1L256.5 720.6L259.4 719.8L262.2 718.8L265.1 717.6L267.8 716.1L270.5 714.4L273.1 712.5L275.5 710.3L277.8 708L280 705.4L282 702.6L283.8 699.7L285.4 696.7L286.9 693.4L288 690.1L289 686.7L289.7 683.2L290.2 679.7L290.5 676.1L290.5 672.5L290.2 668.9L289.7 665.4L289 661.9L288 658.5L286.9 655.2L285.4 651.9L283.8 648.9L282 646L280 643.2L277.8 640.6L275.5 638.3L273.1 636.1L270.5 634.2L267.8 632.5L265.1 631L262.2 629.8L259.4 628.8L256.5 628L253.6 627.5L250.7 627.2L247.8 627.1L245 627.2Z"/><path d="M309.8 652L318.3 638.9L320 638.9L320 720.8L309.8 720.8Z"/><path d="M296.7 653.1L310.7 649.4L310.3 647.8L296.3 651.5Z"/><path d="M297.6 721.6L335.8 721.6L335.8 720L297.6 720Z"/><path d="M317.7 678.1L318.5 674.1L319.6 670.4L320.8 666.8L322.1 663.5L323.6 660.5L325.2 657.7L326.9 655.3L328.7 653.1L330.6 651.3L332.5 649.8L334.5 648.7L336.5 647.9L338.5 647.5L340.6 647.5L342.6 647.7L344.9 648.4L346.1 643.6L343.4 643L340.5 642.9L337.8 643.3L335.2 644.1L332.7 645.3L330.4 646.9L328.3 648.8L326.3 651L324.5 653.5L322.8 656.3L321.3 659.4L320 662.7L318.8 666.2L317.8 669.9L317 673.8L316.3 677.9Z"/><path d="M353.8 649.6L353.4 651.6L352.3 653.3L350.6 654.4L348.6 654.8L346.6 654.4L344.9 653.3L343.8 651.6L343.4 649.6L343.8 647.6L344.9 645.9L346.6 644.8L348.6 644.4L350.6 644.8L352.3 645.9L353.4 647.6Z"/><path d="M437.1 675.2L436.5 672.4L435.7 669.5L434.7 666.6L433.5 663.9L432.1 661.3L430.5 658.8L428.8 656.5L426.9 654.3L424.9 652.3L422.8 650.5L420.6 648.8L418.3 647.4L415.9 646.1L413.5 645.1L411.1 644.2L408.6 643.5L406.2 643L403.7 642.7L401.2 642.5L398.8 642.5L396.4 642.5L393.9 642.6L391.5 642.8L389 643.2L386.6 643.8L384.1 644.6L381.7 645.6L379.3 646.7L377 648.1L374.7 649.6L372.5 651.3L370.5 653.3L368.5 655.3L366.7 657.6L365.1 660L363.6 662.6L362.3 665.2L361.2 668L360.2 670.9L359.5 673.9L359 676.9L358.8 679.9L358.7 683L358.9 686L359.3 689L359.9 692L360.7 694.9L361.7 697.8L362.9 700.5L364.3 703.1L365.9 705.6L367.6 707.9L369.5 710.1L371.5 712.1L373.6 713.9L375.8 715.6L378.1 717L380.5 718.3L382.9 719.3L385.3 720.2L387.8 720.9L390.2 721.4L392.7 721.7L395.2 721.9L397.6 721.9L400 721.9L402.5 721.8L404.9 721.6L407.4 721.2L409.8 720.6L412.3 719.8L414.7 718.8L417.1 717.7L419.3 716.2L421.3 714.4L423.2 712.4L424.8 710.2L426.2 707.9L427.4 705.4L428.4 702.8L429.1 700.2L429.6 697.5L428.5 697.1L427 699.3L425.5 701.3L423.9 703.3L422.3 705.1L420.6 706.8L418.9 708.5L417.2 710L415.5 711.4L413.8 712.9L412.1 714.4L410.3 715.7L408.4 716.8L406.4 717.8L404.3 718.6L402.1 719.2L399.9 719.6L397.6 719.7L395.4 719.4L393.2 718.9L391.1 718.2L389 717.3L387.1 716.3L385.2 715L383.4 713.6L381.8 712.1L380.3 710.5L378.8 708.7L377.5 706.9L376.4 704.9L375.3 702.9L374.3 700.8L373.5 698.7L372.8 696.5L372.2 694.3L371.7 692L371.3 689.7L371 687.4L370.8 685.1L370.7 682.8L370.7 680.5L370.9 678.1L371.1 675.8L371.4 673.5L371.9 671.2L372.5 669L373.1 666.8L373.9 664.6L374.8 662.5L375.8 660.5L376.9 658.5L378.2 656.6L379.5 654.8L381 653.1L382.6 651.5L384.3 650L386.1 648.7L388 647.6L390 646.6L392.1 645.8L394.3 645.2L396.5 644.8L398.8 644.7L401 645L403.2 645.5L405.3 646.2L407.4 647.1L409.3 648.1L411.2 649.4L413 650.8L414.6 652.3L416.1 653.9L417.6 655.7L418.9 657.5L420 659.5L421.1 661.5L422.1 663.6L422.9 665.7L423.6 667.9L424.2 670.1L424.7 672.4L425.1 674.7L425.5 677.1Z"/><path d="M436.5 675L395 675.4L395 677.2L436.5 676.8Z"/><path d="M395.9 675.4L394 675.5L392.2 675.9L390.5 676.3L389 676.9L387.5 677.6L386.2 678.5L384.9 679.4L383.8 680.5L382.9 681.6L382 682.8L381.4 684.1L380.8 685.4L380.4 686.8L380.2 688.2L380.1 689.7L380.1 691.1L383.1 690.9L383 689.7L383 688.5L383.1 687.4L383.4 686.3L383.8 685.2L384.3 684.1L384.9 683.1L385.7 682.1L386.5 681.2L387.5 680.3L388.6 679.6L389.9 678.9L391.2 678.3L392.7 677.8L394.3 677.5L396.1 677.2Z"/><path d="M386.1 692.4L385.8 693.8L385 695L383.8 695.8L382.4 696.1L381 695.8L379.8 695L379 693.8L378.7 692.4L379 691L379.8 689.8L381 689L382.4 688.7L383.8 689L385 689.8L385.8 691Z"/><path d="M456.5 640L456.5 670.6L458.1 670.6L458.1 640Z"/><path d="M458.6 659.2L459.7 657.6L460.8 656.1L462 654.7L463.3 653.4L464.6 652.1L466.1 650.9L467.5 649.9L469.1 648.9L470.6 648L472.3 647.2L474 646.5L475.7 645.9L477.5 645.4L479.3 645.1L481.1 644.9L482.9 644.9L484.7 645.2L486.5 645.6L488.2 646.1L489.9 646.9L491.5 647.7L493 648.7L494.4 649.8L495.6 651.1L496.8 652.4L497.8 653.8L498.8 655.2L499.6 656.6L500.4 658.1L501.1 659.6L501.7 661.1L502.2 662.6L502.6 664.2L503 665.7L503.2 667.3L503.4 668.9L503.5 670.6L514.7 669.5L514.5 667.3L514 665.1L513.3 662.8L512.5 660.7L511.5 658.6L510.3 656.6L509 654.8L507.6 653L506 651.4L504.4 649.9L502.6 648.6L500.7 647.5L498.8 646.5L496.8 645.7L494.9 644.9L492.9 644.4L490.9 643.9L488.9 643.5L486.9 643.3L485 643.1L483 643.1L481 643.1L479.1 643.2L477.1 643.4L475.1 643.8L473.2 644.3L471.3 644.9L469.5 645.7L467.7 646.6L466 647.7L464.4 648.9L463 650.3L461.6 651.7L460.3 653.3L459.2 655L458.2 656.7L457.4 658.5Z"/><path d="M503.6 668L514.9 668L514.9 701L503.6 701Z"/><path d="M503.6 699.2L503.6 701L503.9 703L504.3 704.9L504.9 706.8L505.6 708.6L506.5 710.4L507.5 712L508.6 713.6L509.9 715.1L511.3 716.4L512.7 717.7L514.3 718.8L515.9 719.7L517.6 720.5L519.3 721.2L521 721.8L522.7 722.2L524.5 722.5L526.3 722.7L528 722.7L529.7 722.7L531.4 722.5L531.4 719.9L529.9 719.6L528.5 719.2L527.1 718.7L525.8 718.1L524.5 717.4L523.4 716.6L522.3 715.7L521.2 714.8L520.3 713.8L519.4 712.8L518.7 711.7L518 710.6L517.3 709.5L516.8 708.4L516.3 707.2L515.9 706.1L515.6 704.9L515.3 703.7L515.1 702.5L515 701.4L514.9 700.2L514.8 698.8Z"/><path d="M531.4 722.5L533.1 722.5L534.7 722.4L536.4 722.1L538 721.7L539.6 721.2L541.1 720.6L542.6 719.9L544.1 719.1L545.5 718.1L546.8 717.1L548 716L549.2 714.8L550.3 713.5L551.3 712.2L552.2 710.8L552.9 709.3L553.6 707.7L554.2 706.1L554.6 704.5L555 702.9L555.2 701.2L555.3 699.5L555.3 697.9L555.1 696.2L554.9 694.5L554.5 692.9L554 691.3L553.4 689.7L552.7 688.2L551.9 686.7L551 685.4L548.2 687.2L549 688.4L549.7 689.7L550.3 691L550.8 692.4L551.2 693.7L551.5 695.2L551.8 696.6L551.9 698L551.9 699.5L551.8 700.9L551.6 702.3L551.4 703.7L551 705.1L550.5 706.5L549.9 707.8L549.3 709.1L548.5 710.4L547.7 711.5L546.8 712.7L545.8 713.7L544.7 714.7L543.6 715.6L542.4 716.5L541.2 717.2L539.9 717.9L538.5 718.5L537.2 718.9L535.8 719.3L534.3 719.6L532.9 719.8L531.4 719.9Z"/><path d="M489 680.5L487.5 679.8L485.9 679.2L484.2 678.7L482.5 678.3L480.7 678.1L479 678L477.2 678L475.4 678L473.7 678L471.9 678.1L470.1 678.2L468.3 678.4L466.5 678.7L464.7 679.1L462.9 679.6L461.2 680.3L459.5 681.1L457.9 682L456.3 683L454.8 684.1L453.5 685.4L452.2 686.8L451 688.3L450 689.8L449.1 691.5L448.4 693.3L447.9 695.1L447.5 697L447.3 698.8L447.3 700.8L447.5 702.6L447.9 704.5L448.4 706.3L449.1 708.1L450 709.8L451 711.3L452.2 712.8L453.5 714.2L454.8 715.5L456.3 716.6L457.9 717.6L459.5 718.5L461.2 719.3L462.9 720L464.7 720.5L466.5 721L468.2 721.3L470.1 721.5L471.9 721.7L473.6 721.7L475.4 721.7L477.2 721.6L477.2 719.6L475.6 719.4L474 719.1L472.4 718.6L470.9 718.1L469.5 717.4L468.1 716.6L466.8 715.8L465.6 714.9L464.5 713.9L463.5 712.9L462.6 711.9L461.8 710.8L461.1 709.7L460.5 708.7L460 707.6L459.5 706.5L459.1 705.4L458.9 704.4L458.6 703.3L458.5 702.3L458.4 701.3L458.3 700.3L458.3 699.3L458.4 698.3L458.5 697.3L458.6 696.3L458.9 695.2L459.1 694.2L459.5 693.1L460 692L460.5 690.9L461.1 689.9L461.8 688.8L462.6 687.7L463.5 686.7L464.5 685.7L465.6 684.7L466.8 683.8L468.1 682.9L469.4 682.1L470.9 681.4L472.4 680.8L473.9 680.4L475.6 680.1L477.2 680L478.8 680.1L480.5 680.3L482.1 680.6L483.6 680.9L485.2 681.4L486.7 681.8L488.3 682.4Z"/><path d="M477.2 721.6L479 721.6L480.8 721.5L482.6 721.2L484.4 720.9L486.1 720.4L487.8 719.8L489.4 719.1L491 718.4L492.5 717.5L494 716.5L495.3 715.5L496.6 714.3L497.8 713.1L498.8 711.8L499.8 710.5L500.6 709L501.3 707.6L501.9 706.1L502.4 704.5L502.7 703L500 702.4L499.7 703.8L499.3 705.2L498.8 706.5L498.2 707.7L497.5 709L496.7 710.2L495.8 711.4L494.7 712.5L493.6 713.5L492.4 714.5L491.2 715.4L489.8 716.2L488.4 716.9L486.9 717.6L485.4 718.2L483.8 718.6L482.2 719L480.5 719.3L478.9 719.5L477.2 719.6Z"/><path d="M488.1 682.2L489 682.9L489.8 683.5L490.5 684.2L491.1 684.9L491.6 685.6L492 686.3L492.3 687.1L492.6 687.9L492.7 688.6L492.8 689.4L492.8 690.3L492.8 691.1L492.6 691.9L492.4 692.7L492.1 693.5L491.6 694.4L494.4 695.6L494.8 694.6L495.1 693.5L495.4 692.4L495.5 691.3L495.5 690.3L495.4 689.2L495.2 688.1L495 687.1L494.6 686.1L494.1 685.2L493.5 684.3L492.8 683.4L492 682.6L491.1 681.8L490.2 681.2L489.1 680.6Z"/><path d="M496.1 695.4L495.8 696.9L495 698.1L493.8 698.9L492.3 699.2L490.8 698.9L489.6 698.1L488.8 696.9L488.5 695.4L488.8 693.9L489.6 692.7L490.8 691.9L492.3 691.6L493.8 691.9L495 692.7L495.8 693.9Z"/><path d="M541.8 652.5L549.8 639.2L551.5 639.2L551.5 695L541.8 695Z"/><path d="M528.5 653.6L542.7 649.8L542.3 648.2L528.1 652Z"/><path d="M529.8 694.6L542 694.6L542 693.1L529.8 693.1Z"/><path d="M546.6 665.5L547.2 663.7L547.8 662L548.5 660.4L549.3 658.8L550.1 657.3L551 655.8L552 654.5L553 653.2L554.1 652L555.2 650.9L556.3 649.8L557.5 648.8L558.7 648L560 647.2L561.3 646.5L562.7 646L564.1 645.5L565.5 645.2L566.9 645L568.4 645.1L569.8 645.3L571.2 645.8L572.6 646.3L573.8 647.1L575 648L576.1 649L577.1 650L578 651.1L578.9 652.3L579.7 653.6L580.4 654.9L581 656.3L581.6 657.7L582.1 659.1L582.5 660.6L582.9 662.1L583.2 663.6L583.5 665.1L583.6 666.7L583.8 668.3L583.8 670L595.1 669.2L594.9 667.1L594.5 665L594 662.8L593.4 660.7L592.6 658.7L591.6 656.8L590.5 654.9L589.3 653.2L588 651.6L586.6 650.1L585.2 648.8L583.6 647.5L582 646.5L580.3 645.5L578.7 644.8L576.9 644.2L575.2 643.7L573.5 643.4L571.8 643.2L570.2 643L568.5 643L566.9 643L565.2 643.1L563.6 643.3L562 643.6L560.3 644L558.7 644.6L557.2 645.4L555.7 646.2L554.2 647.3L552.9 648.5L551.6 649.7L550.4 651.2L549.4 652.7L548.4 654.3L547.6 656L546.9 657.8L546.3 659.6L545.9 661.5L545.5 663.4L545.3 665.3Z"/><path d="M583.7 668L595 668L595 721L583.7 721Z"/><path d="M576 721.6L604.7 721.6L604.7 720L576 720Z"/><path d="M592.3 665.5L592.8 663.7L593.4 662L594 660.3L594.8 658.7L595.6 657.2L596.4 655.8L597.3 654.4L598.3 653.1L599.3 651.9L600.4 650.7L601.4 649.7L602.6 648.7L603.7 647.9L604.9 647.1L606.2 646.5L607.5 645.9L608.8 645.5L610.1 645.2L611.5 645L612.8 645L614.2 645.3L615.5 645.7L616.8 646.3L617.9 647L619.1 647.8L620.1 648.8L621.1 649.8L622 650.9L622.8 652L623.6 653.3L624.3 654.6L624.9 655.9L625.5 657.3L626 658.8L626.4 660.3L626.8 661.8L627.1 663.4L627.4 665L627.6 666.6L627.7 668.2L627.8 669.9L637.8 669.3L637.6 667.2L637.3 665.1L636.8 663L636.2 661L635.4 659L634.6 657.1L633.6 655.3L632.5 653.5L631.3 651.9L630 650.4L628.6 649.1L627.2 647.8L625.7 646.7L624.1 645.8L622.6 645L620.9 644.3L619.3 643.8L617.7 643.5L616.1 643.2L614.5 643.1L613 643L611.4 643L609.9 643.1L608.3 643.3L606.7 643.6L605.2 644.1L603.7 644.7L602.2 645.5L600.8 646.4L599.5 647.4L598.2 648.6L597 649.9L595.9 651.3L594.9 652.8L594 654.4L593.2 656.1L592.5 657.8L592 659.6L591.5 661.5L591.2 663.4L591 665.3Z"/><path d="M628 668L637.6 668L637.6 721L628 721Z"/><path d="M617.4 721.6L647.4 721.6L647.4 720L617.4 720Z"/><path d="M703.6 640.7L703.6 670.6L705.2 670.6L705.2 640.7Z"/><path d="M704.7 661.9L704.4 659.7L704 657.6L703.5 655.6L702.7 653.8L701.8 652.1L700.8 650.6L699.6 649.2L698.3 648L696.9 646.9L695.3 645.9L693.7 645.1L691.9 644.4L690.1 643.9L688.1 643.5L686.1 643.3L684 643.2L681.5 643L679.1 643L676.7 643.1L674.4 643.4L672.2 643.8L670 644.5L668 645.3L666 646.3L664.1 647.5L662.4 648.9L660.8 650.5L659.4 652.3L658.2 654.4L657.3 656.6L656.6 659L656.2 662L657 666.1L659 670L661.9 673.2L665.2 676L668.8 678.5L672.7 680.9L676.8 683.2L680.8 685.4L684.9 687.6L688.7 689.7L692.2 691.8L695.1 693.9L697.4 695.9L699 697.7L699.8 699.2L700.1 700.9L700.3 702.1L700.3 703.7L700.2 705.2L699.9 706.8L699.4 708.3L698.7 709.8L697.9 711.2L696.8 712.6L695.6 713.9L694.2 715.1L692.6 716.3L690.9 717.3L688.9 718.2L686.8 718.9L684.5 719.4L682 719.8L679.5 719.7L677 719.4L674.6 718.9L672.3 718.3L670.1 717.4L668 716.4L666 715.3L664.2 713.9L662.4 712.5L660.9 710.8L659.5 709.1L658.2 707.2L657.2 705.2L656.3 703L655.6 700.7L655.2 698.3L653.2 698.7L653.7 701.2L654.4 703.7L655.3 706L656.4 708.2L657.8 710.3L659.3 712.2L661 714L662.9 715.6L664.9 717L667 718.3L669.3 719.4L671.7 720.3L674.1 721L676.7 721.6L679.3 721.9L682 722L684.7 722.2L687.3 722.1L689.8 721.8L692.3 721.4L694.7 720.7L697 719.8L699.1 718.7L701.2 717.4L703.1 716L704.8 714.3L706.4 712.4L707.7 710.3L708.9 708.1L709.8 705.7L710.5 703.2L710.9 700.1L710.2 695.8L708.3 691.7L705.5 688.2L702.2 685.1L698.6 682.3L694.6 679.8L690.6 677.4L686.5 675.1L682.4 672.9L678.5 670.8L675.1 668.8L672.1 666.8L669.8 664.9L668.3 663.3L667.6 662.2L667.4 661L667.2 660.2L667.2 658.9L667.2 657.6L667.5 656.4L667.9 655.2L668.4 654L669.1 652.8L670.1 651.6L671.2 650.5L672.5 649.5L674 648.5L675.7 647.7L677.5 646.9L679.5 646.3L681.7 645.8L684 645.4L686 645.4L687.8 645.6L689.6 645.9L691.3 646.3L692.9 646.9L694.5 647.6L695.9 648.4L697.2 649.3L698.4 650.4L699.5 651.6L700.4 653L701.3 654.5L702 656.2L702.6 658L703 659.9L703.3 662.1Z"/><path d="M659.6 698.2L659.3 699.5L658.6 700.5L657.6 701.2L656.3 701.5L655 701.2L654 700.5L653.3 699.5L653 698.2L653.3 696.9L654 695.9L655 695.2L656.3 694.9L657.6 695.2L658.6 695.9L659.3 696.9Z"/></g></svg>
</div>
<div class="abs" style="left:8px;top:983px;width:594px;height:32px;background:#3c3c3c"></div>
<div class="abs" style="left:9px;top:985px;width:339px;height:28px;background:#343434"></div>
<div class="abs" style="left:16px;top:983px;font-size:22px;line-height:30px;color:#fff">29</div>
<div class="abs b" style="left:67.5px;top:984px;font-size:22px;line-height:30px;color:#fff;transform:scaleX(.7);transform-origin:0 0">%</div>
<div class="abs" style="left:148px;top:984px;font-size:21px;line-height:30px;color:#d2d2d2;letter-spacing:1.1px">1000x1600 px</div>
<div class="abs" style="left:602px;top:991px;width:32px;height:32px;background:#4a4a4a"></div>
<svg class="abs" style="left:608px;top:997px" width="20" height="20" viewBox="0 0 20 20"><path d="M0 0H12L0 12Z M20 6V20H6Z" fill="#8a8a8a"/></svg>
</div>

<!-- DIALOG -->
<div class="panel" id="dlg" style="left:842px;top:302px;width:480px;height:480px;border-radius:9px 9px 4px 4px">
<div class="phead" style="height:36px;line-height:30px">Hue &amp; Saturation</div>
<svg class="x" style="left:452px;top:12px" width="12" height="12" viewBox="0 0 12 12"><g shape-rendering="crispEdges"><rect x="0" y="0" width="2" height="2" fill="#fff"/><rect x="2" y="0" width="2" height="2" fill="#9c9c9c"/><rect x="8" y="0" width="2" height="2" fill="#9c9c9c"/><rect x="10" y="0" width="2" height="2" fill="#fff"/><rect x="0" y="2" width="2" height="2" fill="#9c9c9c"/><rect x="2" y="2" width="2" height="2" fill="#fff"/><rect x="4" y="2" width="2" height="2" fill="#9c9c9c"/><rect x="6" y="2" width="2" height="2" fill="#9c9c9c"/><rect x="8" y="2" width="2" height="2" fill="#fff"/><rect x="10" y="2" width="2" height="2" fill="#9c9c9c"/><rect x="2" y="4" width="2" height="2" fill="#9c9c9c"/><rect x="4" y="4" width="2" height="2" fill="#fff"/><rect x="6" y="4" width="2" height="2" fill="#fff"/><rect x="8" y="4" width="2" height="2" fill="#9c9c9c"/><rect x="2" y="6" width="2" height="2" fill="#9c9c9c"/><rect x="4" y="6" width="2" height="2" fill="#fff"/><rect x="6" y="6" width="2" height="2" fill="#fff"/><rect x="8" y="6" width="2" height="2" fill="#9c9c9c"/><rect x="0" y="8" width="2" height="2" fill="#9c9c9c"/><rect x="2" y="8" width="2" height="2" fill="#fff"/><rect x="4" y="8" width="2" height="2" fill="#9c9c9c"/><rect x="6" y="8" width="2" height="2" fill="#9c9c9c"/><rect x="8" y="8" width="2" height="2" fill="#fff"/><rect x="10" y="8" width="2" height="2" fill="#9c9c9c"/><rect x="0" y="10" width="2" height="2" fill="#fff"/><rect x="2" y="10" width="2" height="2" fill="#9c9c9c"/><rect x="8" y="10" width="2" height="2" fill="#9c9c9c"/><rect x="10" y="10" width="2" height="2" fill="#fff"/></g></svg>
<div class="lbl" style="left:40px;top:75px;font-size:20px">Hue:</div>
<div class="inp" style="left:356px;top:72px;width:80px;height:31px;line-height:31px;padding-left:9px">-135</div>
<div class="track" style="left:44px;top:110px;width:400px;height:24px"></div>
<div class="thumb" style="left:82px;top:110px;width:18px;height:24px"></div>
<div class="lbl" style="left:40px;top:165px;font-size:20px;letter-spacing:0.05px">Saturation:</div>
<div class="inp" style="left:356px;top:162px;width:80px;height:31px;line-height:31px;padding-left:9px">0</div>
<div class="track" style="left:44px;top:200px;width:400px;height:24px"></div>
<div class="thumb" style="left:232px;top:200px;width:18px;height:24px"></div>
<div class="lbl" style="left:40px;top:255px;font-size:20px;letter-spacing:-0.55px">Lightness:</div>
<div class="inp" style="left:356px;top:252px;width:80px;height:31px;line-height:31px;padding-left:9px">0</div>
<div class="track" style="left:44px;top:290px;width:400px;height:24px"></div>
<div class="thumb" style="left:232px;top:290px;width:18px;height:24px"></div>
<div class="abs" style="left:40px;top:346px;width:22px;height:22px;background:#262626;border:2px solid #000"></div>
<svg class="abs" style="left:40px;top:338px" width="30" height="30" viewBox="0 0 30 30"><path d="M4.8 15.2L11.3 22.8L23 4.8" stroke="#fff" stroke-width="2.6" fill="none"/></svg>
<div class="lbl" style="left:72px;top:345px;font-size:20px">Colorize</div>
<div class="abs btn" style="left:156px;top:414px;width:140px;height:40px;background:#6f6f6f;border-radius:4px;text-align:center;font-size:20px;line-height:35px">Cancel</div>
<div class="abs btn" style="left:316px;top:414px;width:140px;height:40px;background:#62bed6;border-radius:4px;text-align:center;font-size:20px;line-height:35px">OK</div>
</div>

<!-- NAVIGATOR -->
<div class="panel" id="nav" style="left:1396px;top:104px;width:440px;height:310px">
<div class="phead" style="height:36px;line-height:30px">Navigator</div>
<svg class="x" style="left:412px;top:12px" width="12" height="12" viewBox="0 0 12 12"><g shape-rendering="crispEdges"><rect x="0" y="0" width="2" height="2" fill="#fff"/><rect x="2" y="0" width="2" height="2" fill="#9c9c9c"/><rect x="8" y="0" width="2" height="2" fill="#9c9c9c"/><rect x="10" y="0" width="2" height="2" fill="#fff"/><rect x="0" y="2" width="2" height="2" fill="#9c9c9c"/><rect x="2" y="2" width="2" height="2" fill="#fff"/><rect x="4" y="2" width="2" height="2" fill="#9c9c9c"/><rect x="6" y="2" width="2" height="2" fill="#9c9c9c"/><rect x="8" y="2" width="2" height="2" fill="#fff"/><rect x="10" y="2" width="2" height="2" fill="#9c9c9c"/><rect x="2" y="4" width="2" height="2" fill="#9c9c9c"/><rect x="4" y="4" width="2" height="2" fill="#fff"/><rect x="6" y="4" width="2" height="2" fill="#fff"/><rect x="8" y="4" width="2" height="2" fill="#9c9c9c"/><rect x="2" y="6" width="2" height="2" fill="#9c9c9c"/><rect x="4" y="6" width="2" height="2" fill="#fff"/><rect x="6" y="6" width="2" height="2" fill="#fff"/><rect x="8" y="6" width="2" height="2" fill="#9c9c9c"/><rect x="0" y="8" width="2" height="2" fill="#9c9c9c"/><rect x="2" y="8" width="2" height="2" fill="#fff"/><rect x="4" y="8" width="2" height="2" fill="#9c9c9c"/><rect x="6" y="8" width="2" height="2" fill="#9c9c9c"/><rect x="8" y="8" width="2" height="2" fill="#fff"/><rect x="10" y="8" width="2" height="2" fill="#9c9c9c"/><rect x="0" y="10" width="2" height="2" fill="#fff"/><rect x="2" y="10" width="2" height="2" fill="#9c9c9c"/><rect x="8" y="10" width="2" height="2" fill="#9c9c9c"/><rect x="10" y="10" width="2" height="2" fill="#fff"/></g></svg>
<div class="abs" id="navthumb" style="left:20px;top:50px;width:120px;height:188px;background:#434343;border:1px solid #9a9a9a;box-shadow:inset 0 0 0 1px #fff, inset 0 0 0 4px #a9191d"></div>
<svg class="abs" id="navmini" style="left:23px;top:53px" width="113.1" height="180.6" viewBox="174 154 580 926"><g fill="#fff" stroke="#fff" stroke-width="0.9"><path d="M257.4 531L256.4 529.2L255.3 527.4L254 525.8L252.5 524.3L251 523L249.3 521.8L247.6 520.8L245.8 520.1L243.9 519.5L242.1 519.1L240.2 518.9L238.4 518.8L236.5 518.8L234.7 518.8L232.8 518.9L231 519.2L229.1 519.6L227.3 520.2L225.4 520.9L223.6 521.8L221.8 522.8L220.1 524L218.4 525.4L216.9 526.9L215.4 528.6L214 530.4L212.7 532.3L211.6 534.3L210.5 536.4L209.7 538.6L208.9 540.9L208.3 543.2L207.9 545.6L207.6 548.1L207.5 550.5L207.5 553L207.7 555.4L208.1 557.8L208.6 560.2L209.3 562.5L210.1 564.7L211.1 566.9L212.2 569L213.4 570.9L214.7 572.8L216.1 574.5L217.7 576.1L219.3 577.5L221 578.8L222.7 579.9L224.5 580.9L226.4 581.7L228.2 582.3L230.1 582.8L231.9 583.2L233.8 583.4L235.6 583.4L237.5 583.4L239.3 583.4L241.2 583.1L243 582.8L244.8 582.2L246.6 581.4L248.3 580.5L249.9 579.4L251.4 578.1L252.8 576.7L254.1 575.1L252.8 573.9L251.4 575.2L249.9 576.4L248.5 577.4L247 578.4L245.5 579.3L243.9 580L242.3 580.6L240.7 581.1L239.1 581.5L237.4 581.7L235.7 581.7L234.1 581.5L232.4 581L230.9 580.4L229.4 579.6L227.9 578.7L226.6 577.7L225.3 576.5L224.1 575.3L222.9 573.9L221.9 572.5L220.9 570.9L220 569.3L219.2 567.7L218.5 565.9L217.9 564.1L217.3 562.3L216.9 560.4L216.5 558.5L216.2 556.5L216 554.6L215.9 552.6L215.9 550.6L216 548.6L216.1 546.7L216.4 544.7L216.7 542.8L217.1 540.9L217.6 539L218.2 537.2L218.8 535.4L219.6 533.7L220.4 532.1L221.4 530.5L222.4 529L223.5 527.6L224.6 526.3L225.9 525.1L227.2 524L228.6 523L230.1 522.2L231.6 521.5L233.2 521L234.9 520.6L236.5 520.4L238.2 520.5L239.9 520.9L241.5 521.4L243 522L244.5 522.8L246 523.7L247.4 524.7L248.8 525.7L250.2 526.9L251.5 528.1L252.8 529.4L254.1 530.8L255.4 532.4Z"/><path d="M255.9 514.6L255.9 542.4L257.3 542.4L257.3 514.6Z"/><path d="M250.6 554L259.7 554L259.7 578L260.5 586.2L259.6 586.2L258.3 580.5L250.6 577.5Z"/><path d="M234.6 555L268 555L268 553.5L234.6 553.5Z"/><path d="M280.5 537.5L286.2 528.5L287.5 528.5L287.5 582.4L280.5 582.4Z"/><path d="M272.4 536.9L281.4 534.4L281 533.2L272 535.7Z"/><path d="M271.5 582.9L297.2 582.9L297.2 581.5L271.5 581.5Z"/><path d="M286.1 552.1L286.6 549.9L287.2 547.8L287.9 545.8L288.7 543.9L289.6 542.1L290.5 540.5L291.5 539L292.6 537.6L293.7 536.4L294.9 535.5L296.1 534.7L297.3 534.1L298.4 533.7L299.6 533.6L300.7 533.6L302 533.9L302.6 530.5L301 530.3L299.2 530.5L297.6 530.9L296.1 531.5L294.6 532.4L293.3 533.5L292 534.7L290.8 536.2L289.7 537.7L288.8 539.5L287.9 541.3L287.1 543.2L286.4 545.3L285.8 547.4L285.3 549.6L284.9 551.9Z"/><path d="M307.9 534.3L307.6 535.6L306.9 536.7L305.8 537.4L304.5 537.7L303.2 537.4L302.1 536.7L301.4 535.6L301.1 534.3L301.4 533L302.1 531.9L303.2 531.2L304.5 530.9L305.8 531.2L306.9 531.9L307.6 533Z"/><path d="M363.9 552.9L363.6 551L363.1 549.1L362.5 547.1L361.8 545.3L361 543.5L360 541.8L359 540.1L357.8 538.6L356.6 537.2L355.2 535.9L353.8 534.7L352.4 533.7L350.9 532.7L349.3 531.9L347.7 531.3L346.2 530.7L344.6 530.3L343 530L341.4 529.9L339.8 529.8L338.2 529.8L336.6 529.8L335 529.9L333.4 530.2L331.8 530.5L330.2 531L328.7 531.6L327.1 532.3L325.6 533.2L324.1 534.2L322.7 535.3L321.3 536.5L320 537.9L318.8 539.4L317.7 540.9L316.7 542.6L315.8 544.4L315 546.2L314.4 548.1L313.8 550L313.5 552L313.2 554.1L313.1 556.1L313.1 558.1L313.3 560.2L313.6 562.2L314.1 564.1L314.7 566.1L315.4 567.9L316.2 569.7L317.2 571.4L318.2 573.1L319.4 574.6L320.6 576L322 577.3L323.4 578.5L324.8 579.5L326.3 580.5L327.9 581.3L329.5 581.9L331 582.5L332.6 582.9L334.2 583.2L335.8 583.3L337.4 583.4L339 583.4L340.6 583.4L342.2 583.3L343.8 583L345.4 582.7L347 582.2L348.5 581.6L350.1 580.9L351.6 580L353 578.9L354.2 577.6L355.3 576.2L356.3 574.6L357.1 573L357.7 571.3L358.3 569.6L358.6 567.8L357.7 567.4L356.7 568.8L355.7 570.2L354.6 571.5L353.6 572.7L352.5 573.8L351.4 574.9L350.2 575.9L349.1 576.8L348 577.8L346.9 578.7L345.7 579.5L344.5 580.3L343.2 580.8L341.8 581.3L340.4 581.6L339 581.8L337.5 581.7L336.1 581.5L334.7 581.1L333.4 580.6L332.1 579.9L330.9 579.1L329.7 578.3L328.6 577.3L327.6 576.3L326.6 575.1L325.8 573.9L325 572.7L324.2 571.3L323.6 570L323 568.5L322.5 567.1L322.1 565.6L321.7 564.1L321.4 562.5L321.2 561L321 559.4L320.9 557.8L320.9 556.2L321 554.6L321.1 553L321.3 551.5L321.5 549.9L321.9 548.4L322.3 546.9L322.7 545.4L323.3 543.9L323.9 542.6L324.6 541.2L325.4 539.9L326.2 538.7L327.1 537.5L328.1 536.4L329.2 535.4L330.3 534.5L331.5 533.7L332.7 532.9L334 532.4L335.4 531.9L336.8 531.6L338.2 531.4L339.7 531.5L341.1 531.7L342.5 532.1L343.8 532.6L345.1 533.3L346.3 534.1L347.5 534.9L348.6 535.9L349.6 536.9L350.6 538.1L351.4 539.3L352.2 540.5L353 541.9L353.6 543.2L354.2 544.7L354.7 546.1L355.1 547.6L355.5 549.1L355.8 550.7L356 552.2L356.2 553.9Z"/><path d="M364.2 552.8L337 553.1L337 554.5L364.2 554.2Z"/><path d="M337.4 553.1L336.2 553.2L335 553.4L333.9 553.8L332.8 554.2L331.9 554.6L330.9 555.2L330.1 555.8L329.4 556.5L328.7 557.2L328.1 558L327.6 558.9L327.2 559.7L326.9 560.6L326.6 561.5L326.5 562.4L326.5 563.3L328.7 563.3L328.7 562.5L328.7 561.8L328.8 561.1L329 560.4L329.3 559.7L329.7 559L330.1 558.4L330.6 557.7L331.2 557.1L331.9 556.6L332.7 556.1L333.5 555.6L334.4 555.2L335.4 554.9L336.4 554.7L337.6 554.5Z"/><path d="M330.8 564.3L330.6 565.3L330 566.1L329.2 566.7L328.2 566.9L327.2 566.7L326.4 566.1L325.8 565.3L325.6 564.3L325.8 563.3L326.4 562.5L327.2 561.9L328.2 561.7L329.2 561.9L330 562.5L330.6 563.3Z"/><path d="M377.1 537.5L383.5 528.5L384.8 528.5L384.8 582.4L377.1 582.4Z"/><path d="M369.7 536.2L378.2 534L377.8 532.8L369.3 535Z"/><path d="M369.5 582.9L392.4 582.9L392.4 581.5L369.5 581.5Z"/><path d="M383.5 544.9L383.9 543.7L384.4 542.6L384.9 541.5L385.5 540.5L386.1 539.5L386.8 538.5L387.5 537.6L388.3 536.8L389.1 535.9L389.9 535.2L390.8 534.5L391.7 533.8L392.7 533.3L393.7 532.7L394.7 532.3L395.8 531.9L396.8 531.6L397.9 531.4L399.1 531.2L400.2 531.3L401.3 531.5L402.4 531.7L403.5 532.1L404.5 532.6L405.4 533.2L406.3 533.9L407.1 534.6L407.9 535.4L408.6 536.2L409.2 537L409.8 537.9L410.3 538.8L410.8 539.8L411.2 540.8L411.5 541.7L411.8 542.7L412.1 543.7L412.3 544.7L412.4 545.7L412.5 546.7L412.6 547.9L420.2 547.2L420 545.9L419.7 544.4L419.4 542.9L418.9 541.5L418.2 540.1L417.5 538.8L416.7 537.6L415.8 536.5L414.9 535.4L413.8 534.4L412.7 533.5L411.6 532.7L410.4 532L409.1 531.4L407.9 530.9L406.6 530.5L405.3 530.2L404 530L402.8 529.9L401.5 529.8L400.3 529.8L399 529.8L397.8 529.8L396.5 529.9L395.3 530.1L394.1 530.4L392.9 530.8L391.7 531.3L390.5 531.9L389.4 532.6L388.4 533.3L387.4 534.2L386.5 535.2L385.7 536.2L384.9 537.3L384.3 538.4L383.7 539.6L383.3 540.8L382.9 542.1L382.6 543.4L382.4 544.6Z"/><path d="M412.6 547L420.2 547L420.2 576L412.6 576Z"/><path d="M412.6 575.6L412.6 576.3L412.8 577.1L412.9 577.9L413.2 578.6L413.5 579.3L413.9 580L414.4 580.7L414.9 581.2L415.4 581.8L416 582.3L416.6 582.7L417.3 583L418 583.4L418.6 583.6L419.3 583.8L420 583.9L420.7 584L421.4 584L422.1 584L422.7 584L423.4 583.9L424 583.8L424 581.6L423.5 581.5L423.1 581.3L422.7 581L422.3 580.8L422 580.5L421.7 580.2L421.4 579.9L421.1 579.5L420.9 579.2L420.8 578.8L420.6 578.5L420.5 578.2L420.4 577.9L420.3 577.5L420.3 577.2L420.2 577L420.2 576.7L420.2 576.4L420.2 576.2L420.2 576L420.2 575.7L420.2 575.4Z"/><path d="M424 583.6L424.5 583.6L425.1 583.5L425.6 583.5L426.1 583.3L426.6 583.1L427.1 582.9L427.6 582.7L428 582.4L428.5 582.1L428.9 581.7L429.3 581.3L429.6 580.9L430 580.4L430.3 580L430.6 579.5L430.8 579L431 578.4L431.2 577.9L431.3 577.3L431.4 576.7L431.5 576.2L431.5 575.6L431.5 575L431.4 574.4L431.3 573.9L431.2 573.3L431.1 572.7L430.9 572.2L430.6 571.7L430.4 571.2L430.1 570.7L429.7 570.2L429.4 569.8L429 569.4L428.6 569L428.2 568.7L427.7 568.4L427.2 568.1L426.7 567.9L426.2 567.7L425.7 567.6L425.2 567.5L424.7 567.4L424.2 567.4L423.6 567.4L423.1 567.4L422.6 567.5L422.1 567.6L422.6 569.5L423 569.3L423.4 569.3L423.7 569.2L424.1 569.2L424.5 569.2L424.9 569.3L425.2 569.4L425.6 569.5L426 569.7L426.3 569.9L426.6 570.1L426.9 570.3L427.3 570.6L427.5 570.9L427.8 571.2L428.1 571.5L428.3 571.8L428.5 572.2L428.7 572.6L428.8 573L429 573.4L429.1 573.8L429.2 574.3L429.3 574.7L429.3 575.1L429.3 575.6L429.3 576L429.2 576.4L429.2 576.9L429.1 577.3L428.9 577.7L428.8 578.1L428.6 578.5L428.4 578.9L428.2 579.3L428 579.6L427.7 579.9L427.5 580.2L427.2 580.5L426.9 580.8L426.5 581L426.2 581.2L425.8 581.4L425.5 581.5L425.1 581.6L424.8 581.7L424.4 581.8L424 581.8Z"/><path d="M424.4 569L424.2 570L423.7 570.8L422.9 571.3L421.9 571.5L420.9 571.3L420.1 570.8L419.6 570L419.4 569L419.6 568L420.1 567.2L420.9 566.7L421.9 566.5L422.9 566.7L423.7 567.2L424.2 568Z"/><path d="M438.7 529.2L438.7 548.7L440.1 548.7L440.1 529.2Z"/><path d="M440.2 540.2L441 539.2L441.8 538.2L442.6 537.3L443.5 536.5L444.4 535.7L445.4 534.9L446.4 534.3L447.5 533.7L448.6 533.1L449.7 532.6L450.9 532.2L452.1 531.9L453.3 531.7L454.5 531.5L455.8 531.5L457 531.6L458.2 531.8L459.4 532.2L460.5 532.6L461.6 533.1L462.6 533.8L463.6 534.5L464.5 535.3L465.3 536.2L466 537.1L466.6 538L467.3 539L467.8 539.9L468.3 540.9L468.7 541.9L469 542.9L469.3 543.9L469.5 544.9L469.7 545.9L469.9 547L469.9 548.1L477.4 547.3L477.2 545.9L476.9 544.4L476.4 542.9L475.8 541.5L475.2 540.1L474.4 538.8L473.5 537.6L472.5 536.5L471.4 535.4L470.3 534.4L469.1 533.6L467.8 532.9L466.5 532.3L465.2 531.7L463.8 531.3L462.5 530.9L461.1 530.6L459.8 530.4L458.5 530.2L457.1 530.1L455.8 530.1L454.4 530.2L453.1 530.2L451.8 530.4L450.5 530.7L449.2 531L447.9 531.5L446.7 532.1L445.5 532.7L444.4 533.5L443.3 534.3L442.3 535.2L441.4 536.2L440.6 537.3L439.9 538.4L439.3 539.6Z"/><path d="M469.9 546L477.4 546L477.4 582.4L469.9 582.4Z"/><path d="M477.4 577.5L484.3 581.2L484.3 582.4L477.4 582.4Z"/><path d="M461.7 556.6L460.8 556L459.8 555.4L458.7 554.9L457.6 554.6L456.5 554.3L455.3 554.1L454.1 554L452.9 554L451.8 554L450.6 553.9L449.4 553.9L448.2 554L447 554.1L445.8 554.3L444.6 554.5L443.4 554.9L442.2 555.3L441.1 555.7L440 556.3L438.9 557L437.9 557.7L436.9 558.5L436 559.4L435.2 560.4L434.5 561.4L433.9 562.6L433.4 563.7L432.9 564.9L432.7 566.2L432.5 567.5L432.5 568.7L432.5 570L432.8 571.3L433.1 572.5L433.5 573.7L434.1 574.9L434.8 576L435.5 577L436.4 577.9L437.3 578.8L438.3 579.6L439.3 580.3L440.4 580.9L441.5 581.4L442.7 581.9L443.8 582.3L445 582.6L446.2 582.8L447.4 583L448.6 583.1L449.8 583.1L451 583.1L452.2 583L452.2 581.6L451.1 581.4L450.1 581.2L449 580.9L448 580.5L447.1 580.1L446.2 579.6L445.4 579L444.6 578.4L443.9 577.7L443.2 577.1L442.6 576.4L442.1 575.6L441.7 574.9L441.3 574.2L440.9 573.5L440.7 572.7L440.4 572L440.3 571.3L440.1 570.6L440 570L440 569.3L440 568.6L440 568L440 567.3L440.1 566.6L440.2 565.9L440.4 565.2L440.6 564.5L440.8 563.8L441.1 563.1L441.5 562.4L441.9 561.6L442.4 560.9L443 560.2L443.6 559.5L444.3 558.9L445.1 558.2L445.9 557.6L446.7 557.1L447.7 556.6L448.6 556.2L449.7 555.8L450.7 555.6L451.8 555.5L452.9 555.5L454 555.6L455 555.8L456.1 556L457.1 556.3L458.1 556.6L459.1 557L460.1 557.4L461 557.8Z"/><path d="M452.2 583L453.4 583L454.6 582.9L455.8 582.8L456.9 582.5L458.1 582.2L459.2 581.8L460.3 581.4L461.3 580.9L462.3 580.3L463.2 579.6L464.1 578.9L465 578.2L465.7 577.4L466.5 576.5L467.1 575.6L467.6 574.7L468.1 573.7L468.5 572.7L468.8 571.6L469 570.6L467.1 570.2L466.9 571.2L466.6 572L466.3 572.9L465.9 573.7L465.4 574.6L464.9 575.4L464.3 576.1L463.6 576.9L462.9 577.5L462.1 578.2L461.3 578.8L460.4 579.3L459.5 579.8L458.5 580.3L457.5 580.6L456.5 580.9L455.5 581.2L454.4 581.4L453.3 581.5L452.2 581.6Z"/><path d="M461 557.8L461.6 558.2L462.1 558.7L462.6 559.1L462.9 559.5L463.2 560L463.5 560.4L463.6 560.8L463.8 561.2L463.8 561.7L463.8 562.1L463.8 562.5L463.7 562.9L463.6 563.3L463.5 563.7L463.2 564L462.9 564.5L464.7 565.5L465 565L465.2 564.4L465.4 563.8L465.6 563.2L465.6 562.6L465.6 562L465.6 561.4L465.4 560.8L465.2 560.2L464.9 559.6L464.6 559.1L464.1 558.5L463.6 558L463.1 557.5L462.5 557.1L461.8 556.6Z"/><path d="M465.8 565.4L465.6 566.4L465 567.2L464.2 567.8L463.2 568L462.2 567.8L461.4 567.2L460.8 566.4L460.6 565.4L460.8 564.4L461.4 563.6L462.2 563L463.2 562.8L464.2 563L465 563.6L465.6 564.4Z"/><path d="M541.8 518.5L548 509.7L549.3 509.7L549.3 577.5L552.6 581.2L552.6 582.4L541.8 582.4Z"/><path d="M532.2 516.8L542.7 513.9L542.3 512.7L531.8 515.6Z"/><path d="M529.8 542L529.2 540.4L528.4 538.9L527.5 537.5L526.4 536.2L525.3 535L524.1 533.9L522.8 533L521.4 532.2L520 531.6L518.5 531.2L517.1 530.9L515.6 530.7L514.1 530.7L512.7 530.7L511.2 530.7L509.7 530.8L508.3 531L506.7 531.4L505.2 531.8L503.8 532.5L502.3 533.2L500.8 534.1L499.4 535.1L498.1 536.3L496.8 537.5L495.6 538.9L494.5 540.5L493.5 542.1L492.6 543.8L491.8 545.6L491.1 547.4L490.5 549.3L490.1 551.3L489.8 553.3L489.6 555.3L489.6 557.3L489.6 559.4L489.9 561.4L490.2 563.4L490.7 565.3L491.3 567.2L492.1 569L492.9 570.8L493.9 572.4L495 574L496.1 575.5L497.3 576.8L498.7 578L500 579.1L501.4 580.1L502.9 580.9L504.4 581.6L505.9 582.2L507.4 582.6L508.9 582.9L510.4 583.1L511.8 583.1L513.3 583.1L513.3 581.5L512 581.4L510.8 581L509.5 580.6L508.4 580L507.3 579.3L506.2 578.5L505.3 577.6L504.4 576.6L503.5 575.5L502.7 574.4L502 573.2L501.4 571.9L500.8 570.6L500.3 569.2L499.8 567.8L499.4 566.4L499.1 564.9L498.8 563.4L498.6 561.9L498.4 560.3L498.3 558.8L498.3 557.2L498.3 555.7L498.3 554.1L498.5 552.6L498.7 551L498.9 549.5L499.2 548L499.6 546.6L500.1 545.2L500.6 543.8L501.1 542.4L501.7 541.2L502.4 539.9L503.2 538.8L504 537.7L504.9 536.6L505.8 535.7L506.8 534.8L507.9 534.1L509 533.5L510.2 532.9L511.5 532.6L512.7 532.3L514 532.4L515.3 532.6L516.6 533L517.8 533.4L518.9 534L520.1 534.7L521.2 535.4L522.3 536.2L523.4 537.1L524.5 538L525.5 539.1L526.5 540.2L527.6 541.4L528.5 542.7Z"/><path d="M513.3 583.1L515.9 583.1L518.4 582.9L520.8 582.6L523.2 582.2L525.5 581.6L527.7 581L529.9 580.2L531.9 579.2L533.9 578.2L535.7 577L537.5 575.8L539.1 574.4L540.6 572.8L542 571.2L543.3 569.4L544.4 567.6L542.6 566.4L541.5 568.2L540.3 569.9L539.1 571.4L537.7 572.9L536.2 574.2L534.6 575.4L532.9 576.5L531.1 577.6L529.1 578.4L527.1 579.2L525 579.9L522.8 580.5L520.6 580.9L518.2 581.2L515.8 581.4L513.3 581.5Z"/><path d="M528.7 542.9L530.3 544.2L531.4 545.4L532.1 546.6L532.5 547.7L532.6 548.7L532.5 549.7L532.1 550.7L531.4 551.6L530.6 552.5L529.5 553.3L528.2 554L526.8 554.7L525.1 555.2L523.3 555.6L521.5 555.8L519.4 555.9L519.6 558.9L521.8 558.7L523.9 558.3L525.9 557.8L527.7 557.1L529.4 556.3L530.9 555.3L532.2 554.2L533.2 553L534 551.6L534.5 550.2L534.6 548.7L534.3 547.2L533.7 545.7L532.7 544.3L531.4 543L529.7 541.7Z"/><path d="M521.5 557.8L521.3 558.9L520.7 559.8L519.8 560.4L518.7 560.6L517.6 560.4L516.7 559.8L516.1 558.9L515.9 557.8L516.1 556.7L516.7 555.8L517.6 555.2L518.7 555L519.8 555.2L520.7 555.8L521.3 556.7Z"/><path d="M571.1 515.7L570.8 517.3L569.9 518.7L568.5 519.6L566.9 519.9L565.3 519.6L563.9 518.7L563 517.3L562.7 515.7L563 514.1L563.9 512.7L565.3 511.8L566.9 511.5L568.5 511.8L569.9 512.7L570.8 514.1Z"/><path d="M563.5 536L569.6 527L571 527L571 573L563.5 573Z"/><path d="M557.7 535.1L564.4 532.8L564 531.6L557.3 533.9Z"/><path d="M563.5 572.2L563.5 573.1L563.7 574.3L564 575.3L564.4 576.4L564.9 577.4L565.5 578.3L566.2 579.2L567 580L567.8 580.8L568.7 581.4L569.7 582L570.7 582.6L571.7 583L572.8 583.4L573.9 583.7L575 583.9L576.1 584.1L577.2 584.2L578.3 584.2L579.4 584.2L580.5 584.2L581.6 584.1L581.6 581.9L580.6 581.8L579.7 581.5L578.8 581.3L577.9 580.9L577.1 580.5L576.3 580.1L575.5 579.6L574.9 579.1L574.2 578.6L573.7 578.1L573.1 577.5L572.7 577L572.3 576.4L572 575.9L571.7 575.3L571.5 574.8L571.3 574.3L571.2 573.8L571.1 573.3L571 572.9L571 572.4L570.9 571.8Z"/><path d="M581.6 584L582.7 584L583.7 584L584.8 583.8L585.8 583.7L586.8 583.5L587.8 583.2L588.8 582.9L589.8 582.5L590.7 582L591.6 581.5L592.4 581L593.2 580.4L593.9 579.8L594.6 579.1L595.2 578.4L595.8 577.6L596.2 576.8L596.7 576L597 575.1L597.2 574.2L597.4 573.4L597.5 572.5L597.5 571.5L597.4 570.6L597.2 569.8L597 568.9L596.7 568L596.2 567.2L595.8 566.4L595.2 565.7L592.9 567.3L593.3 568L593.7 568.6L593.9 569.2L594.2 569.8L594.3 570.4L594.4 571.1L594.5 571.7L594.5 572.3L594.4 572.9L594.3 573.6L594.2 574.2L593.9 574.8L593.7 575.4L593.3 576L592.9 576.6L592.5 577.2L592 577.8L591.4 578.3L590.8 578.8L590.1 579.3L589.4 579.8L588.7 580.2L587.9 580.6L587.1 580.9L586.2 581.2L585.3 581.5L584.4 581.7L583.5 581.8L582.5 581.9L581.6 582Z"/><path d="M588.9 537.5L594.4 528.4L595.7 528.4L595.7 567.5L588.9 567.5Z"/><path d="M580.9 537.2L589.8 534.6L589.4 533.4L580.5 536Z"/><path d="M581.5 565.9L589.2 565.9L589.2 564.6L581.5 564.6Z"/><path d="M594.6 544.9L595 543.7L595.4 542.6L595.9 541.5L596.5 540.4L597.1 539.5L597.7 538.5L598.4 537.6L599.1 536.8L599.9 536L600.7 535.2L601.5 534.5L602.3 533.9L603.2 533.3L604.1 532.8L605.1 532.3L606 531.9L607 531.6L608.1 531.4L609.1 531.2L610.1 531.3L611.2 531.5L612.2 531.8L613.1 532.2L614.1 532.7L614.9 533.3L615.7 534L616.4 534.7L617.1 535.4L617.7 536.2L618.3 537.1L618.8 538L619.3 538.9L619.7 539.8L620 540.8L620.3 541.8L620.6 542.7L620.8 543.7L620.9 544.7L621.1 545.7L621.1 546.7L621.2 547.9L629.4 547.2L629.2 545.9L629 544.4L628.6 542.9L628.1 541.5L627.5 540.1L626.8 538.8L626 537.6L625.2 536.4L624.2 535.3L623.2 534.4L622.1 533.5L621 532.7L619.9 532L618.7 531.4L617.5 530.9L616.2 530.5L615 530.2L613.8 530L612.6 529.8L611.4 529.8L610.2 529.8L609.1 529.8L607.9 529.8L606.7 529.9L605.5 530.1L604.4 530.4L603.2 530.8L602.1 531.3L601 531.9L600 532.6L599 533.3L598.1 534.2L597.2 535.1L596.5 536.2L595.8 537.3L595.2 538.4L594.6 539.6L594.2 540.8L593.9 542.1L593.7 543.4L593.5 544.6Z"/><path d="M621.1 547L629.4 547L629.4 582.4L621.1 582.4Z"/><path d="M613.7 582.9L636.1 582.9L636.1 581.5L613.7 581.5Z"/><path d="M692.2 554.3L691.9 552.4L691.5 550.4L691 548.5L690.3 546.6L689.5 544.8L688.6 543.1L687.6 541.4L686.4 539.9L685.2 538.5L683.9 537.1L682.5 535.9L681 534.8L679.5 533.9L677.9 533.1L676.3 532.4L674.7 531.8L673.1 531.4L671.5 531L669.8 530.8L668.2 530.7L666.6 530.7L665 530.7L663.4 530.8L661.7 531L660.1 531.3L658.5 531.7L656.9 532.2L655.3 532.9L653.7 533.7L652.2 534.6L650.7 535.7L649.3 536.8L647.9 538.1L646.7 539.5L645.5 541.1L644.4 542.7L643.5 544.4L642.6 546.2L641.9 548L641.4 549.9L640.9 551.9L640.7 553.9L640.5 555.9L640.5 557.9L640.7 560L641 561.9L641.4 563.9L642 565.8L642.7 567.7L643.5 569.5L644.5 571.2L645.5 572.8L646.7 574.3L648 575.7L649.3 577L650.7 578.2L652.2 579.2L653.7 580.1L655.3 580.9L656.9 581.6L658.5 582.1L660.2 582.5L661.8 582.8L663.4 583L665 583.1L666.6 583.1L668.3 583.1L669.9 583L671.5 582.8L673.1 582.4L674.8 582L676.4 581.4L678 580.7L679.5 579.9L680.9 578.8L682.2 577.5L683.3 576.1L684.3 574.6L685.2 573L685.9 571.3L686.4 569.6L686.8 567.8L685.9 567.4L684.9 568.9L683.8 570.2L682.7 571.4L681.6 572.6L680.5 573.7L679.4 574.7L678.3 575.7L677.1 576.6L676 577.6L674.8 578.5L673.6 579.3L672.3 580L670.9 580.6L669.5 581L668.1 581.3L666.6 581.5L665.1 581.4L663.7 581.2L662.3 580.7L660.9 580.2L659.6 579.5L658.3 578.8L657.1 577.9L656 576.9L655 575.9L654 574.7L653.1 573.5L652.3 572.3L651.6 571L650.9 569.6L650.3 568.2L649.8 566.8L649.4 565.3L649 563.8L648.7 562.3L648.5 560.8L648.4 559.2L648.3 557.7L648.3 556.2L648.4 554.6L648.5 553.1L648.7 551.5L649 550L649.4 548.5L649.8 547.1L650.3 545.6L650.9 544.2L651.6 542.9L652.3 541.6L653.1 540.3L654 539.1L654.9 538L656 536.9L657.1 535.9L658.3 535.1L659.5 534.3L660.9 533.6L662.2 533.1L663.6 532.7L665.1 532.4L666.6 532.3L668.1 532.4L669.5 532.7L670.9 533.2L672.3 533.8L673.6 534.5L674.8 535.3L676 536.2L677.1 537.2L678.1 538.2L679 539.4L679.9 540.6L680.7 541.9L681.4 543.2L682.1 544.6L682.6 546L683.1 547.4L683.5 548.9L683.9 550.4L684.1 551.9L684.3 553.4L684.5 555.1Z"/><path d="M692.4 553.9L665 554.2L665 555.6L692.4 555.3Z"/><path d="M665.4 554.2L664.3 554.3L663.2 554.5L662.2 554.7L661.2 555L660.2 555.4L659.4 555.8L658.6 556.3L657.8 556.9L657.2 557.5L656.6 558.2L656.1 558.9L655.6 559.6L655.3 560.4L655.1 561.2L654.9 562L654.9 562.8L657.1 562.8L657.1 562.2L657.1 561.6L657.3 561L657.5 560.4L657.7 559.9L658.1 559.3L658.5 558.8L659 558.3L659.6 557.8L660.2 557.3L661 556.9L661.7 556.5L662.6 556.2L663.5 555.9L664.5 555.7L665.6 555.6Z"/><path d="M659.2 563.8L659 564.8L658.4 565.6L657.6 566.2L656.6 566.4L655.6 566.2L654.8 565.6L654.2 564.8L654 563.8L654.2 562.8L654.8 562L655.6 561.4L656.6 561.2L657.6 561.4L658.4 562L659 562.8Z"/><path d="M211.7 627.4L221.2 627.4L221.2 721L211.7 721Z"/><path d="M198 628.6L247 628.6L247 627L198 627Z"/><path d="M198 721.6L247 721.6L247 720L198 720Z"/><path d="M245 628.8L247.7 629.1L250.3 629.7L252.8 630.5L255.3 631.6L257.6 632.8L259.9 634.2L262 635.8L264.1 637.6L265.9 639.5L267.7 641.6L269.4 643.7L270.9 646L272.2 648.4L273.5 650.9L274.6 653.4L275.6 656.1L276.4 658.8L277.1 661.5L277.6 664.3L278.1 667.1L278.3 670L278.5 672.9L278.5 675.7L278.3 678.6L278.1 681.5L277.6 684.3L277.1 687.1L276.4 689.8L275.6 692.5L274.6 695.2L273.5 697.7L272.2 700.2L270.9 702.6L269.4 704.9L267.7 707L265.9 709.1L264.1 711L262 712.8L259.9 714.4L257.6 715.8L255.3 717L252.8 718.1L250.3 718.9L247.7 719.5L245 719.8L245 721.4L247.8 721.5L250.7 721.4L253.6 721.1L256.5 720.6L259.4 719.8L262.2 718.8L265.1 717.6L267.8 716.1L270.5 714.4L273.1 712.5L275.5 710.3L277.8 708L280 705.4L282 702.6L283.8 699.7L285.4 696.7L286.9 693.4L288 690.1L289 686.7L289.7 683.2L290.2 679.7L290.5 676.1L290.5 672.5L290.2 668.9L289.7 665.4L289 661.9L288 658.5L286.9 655.2L285.4 651.9L283.8 648.9L282 646L280 643.2L277.8 640.6L275.5 638.3L273.1 636.1L270.5 634.2L267.8 632.5L265.1 631L262.2 629.8L259.4 628.8L256.5 628L253.6 627.5L250.7 627.2L247.8 627.1L245 627.2Z"/><path d="M309.8 652L318.3 638.9L320 638.9L320 720.8L309.8 720.8Z"/><path d="M296.7 653.1L310.7 649.4L310.3 647.8L296.3 651.5Z"/><path d="M297.6 721.6L335.8 721.6L335.8 720L297.6 720Z"/><path d="M317.7 678.1L318.5 674.1L319.6 670.4L320.8 666.8L322.1 663.5L323.6 660.5L325.2 657.7L326.9 655.3L328.7 653.1L330.6 651.3L332.5 649.8L334.5 648.7L336.5 647.9L338.5 647.5L340.6 647.5L342.6 647.7L344.9 648.4L346.1 643.6L343.4 643L340.5 642.9L337.8 643.3L335.2 644.1L332.7 645.3L330.4 646.9L328.3 648.8L326.3 651L324.5 653.5L322.8 656.3L321.3 659.4L320 662.7L318.8 666.2L317.8 669.9L317 673.8L316.3 677.9Z"/><path d="M353.8 649.6L353.4 651.6L352.3 653.3L350.6 654.4L348.6 654.8L346.6 654.4L344.9 653.3L343.8 651.6L343.4 649.6L343.8 647.6L344.9 645.9L346.6 644.8L348.6 644.4L350.6 644.8L352.3 645.9L353.4 647.6Z"/><path d="M437.1 675.2L436.5 672.4L435.7 669.5L434.7 666.6L433.5 663.9L432.1 661.3L430.5 658.8L428.8 656.5L426.9 654.3L424.9 652.3L422.8 650.5L420.6 648.8L418.3 647.4L415.9 646.1L413.5 645.1L411.1 644.2L408.6 643.5L406.2 643L403.7 642.7L401.2 642.5L398.8 642.5L396.4 642.5L393.9 642.6L391.5 642.8L389 643.2L386.6 643.8L384.1 644.6L381.7 645.6L379.3 646.7L377 648.1L374.7 649.6L372.5 651.3L370.5 653.3L368.5 655.3L366.7 657.6L365.1 660L363.6 662.6L362.3 665.2L361.2 668L360.2 670.9L359.5 673.9L359 676.9L358.8 679.9L358.7 683L358.9 686L359.3 689L359.9 692L360.7 694.9L361.7 697.8L362.9 700.5L364.3 703.1L365.9 705.6L367.6 707.9L369.5 710.1L371.5 712.1L373.6 713.9L375.8 715.6L378.1 717L380.5 718.3L382.9 719.3L385.3 720.2L387.8 720.9L390.2 721.4L392.7 721.7L395.2 721.9L397.6 721.9L400 721.9L402.5 721.8L404.9 721.6L407.4 721.2L409.8 720.6L412.3 719.8L414.7 718.8L417.1 717.7L419.3 716.2L421.3 714.4L423.2 712.4L424.8 710.2L426.2 707.9L427.4 705.4L428.4 702.8L429.1 700.2L429.6 697.5L428.5 697.1L427 699.3L425.5 701.3L423.9 703.3L422.3 705.1L420.6 706.8L418.9 708.5L417.2 710L415.5 711.4L413.8 712.9L412.1 714.4L410.3 715.7L408.4 716.8L406.4 717.8L404.3 718.6L402.1 719.2L399.9 719.6L397.6 719.7L395.4 719.4L393.2 718.9L391.1 718.2L389 717.3L387.1 716.3L385.2 715L383.4 713.6L381.8 712.1L380.3 710.5L378.8 708.7L377.5 706.9L376.4 704.9L375.3 702.9L374.3 700.8L373.5 698.7L372.8 696.5L372.2 694.3L371.7 692L371.3 689.7L371 687.4L370.8 685.1L370.7 682.8L370.7 680.5L370.9 678.1L371.1 675.8L371.4 673.5L371.9 671.2L372.5 669L373.1 666.8L373.9 664.6L374.8 662.5L375.8 660.5L376.9 658.5L378.2 656.6L379.5 654.8L381 653.1L382.6 651.5L384.3 650L386.1 648.7L388 647.6L390 646.6L392.1 645.8L394.3 645.2L396.5 644.8L398.8 644.7L401 645L403.2 645.5L405.3 646.2L407.4 647.1L409.3 648.1L411.2 649.4L413 650.8L414.6 652.3L416.1 653.9L417.6 655.7L418.9 657.5L420 659.5L421.1 661.5L422.1 663.6L422.9 665.7L423.6 667.9L424.2 670.1L424.7 672.4L425.1 674.7L425.5 677.1Z"/><path d="M436.5 675L395 675.4L395 677.2L436.5 676.8Z"/><path d="M395.9 675.4L394 675.5L392.2 675.9L390.5 676.3L389 676.9L387.5 677.6L386.2 678.5L384.9 679.4L383.8 680.5L382.9 681.6L382 682.8L381.4 684.1L380.8 685.4L380.4 686.8L380.2 688.2L380.1 689.7L380.1 691.1L383.1 690.9L383 689.7L383 688.5L383.1 687.4L383.4 686.3L383.8 685.2L384.3 684.1L384.9 683.1L385.7 682.1L386.5 681.2L387.5 680.3L388.6 679.6L389.9 678.9L391.2 678.3L392.7 677.8L394.3 677.5L396.1 677.2Z"/><path d="M386.1 692.4L385.8 693.8L385 695L383.8 695.8L382.4 696.1L381 695.8L379.8 695L379 693.8L378.7 692.4L379 691L379.8 689.8L381 689L382.4 688.7L383.8 689L385 689.8L385.8 691Z"/><path d="M456.5 640L456.5 670.6L458.1 670.6L458.1 640Z"/><path d="M458.6 659.2L459.7 657.6L460.8 656.1L462 654.7L463.3 653.4L464.6 652.1L466.1 650.9L467.5 649.9L469.1 648.9L470.6 648L472.3 647.2L474 646.5L475.7 645.9L477.5 645.4L479.3 645.1L481.1 644.9L482.9 644.9L484.7 645.2L486.5 645.6L488.2 646.1L489.9 646.9L491.5 647.7L493 648.7L494.4 649.8L495.6 651.1L496.8 652.4L497.8 653.8L498.8 655.2L499.6 656.6L500.4 658.1L501.1 659.6L501.7 661.1L502.2 662.6L502.6 664.2L503 665.7L503.2 667.3L503.4 668.9L503.5 670.6L514.7 669.5L514.5 667.3L514 665.1L513.3 662.8L512.5 660.7L511.5 658.6L510.3 656.6L509 654.8L507.6 653L506 651.4L504.4 649.9L502.6 648.6L500.7 647.5L498.8 646.5L496.8 645.7L494.9 644.9L492.9 644.4L490.9 643.9L488.9 643.5L486.9 643.3L485 643.1L483 643.1L481 643.1L479.1 643.2L477.1 643.4L475.1 643.8L473.2 644.3L471.3 644.9L469.5 645.7L467.7 646.6L466 647.7L464.4 648.9L463 650.3L461.6 651.7L460.3 653.3L459.2 655L458.2 656.7L457.4 658.5Z"/><path d="M503.6 668L514.9 668L514.9 701L503.6 701Z"/><path d="M503.6 699.2L503.6 701L503.9 703L504.3 704.9L504.9 706.8L505.6 708.6L506.5 710.4L507.5 712L508.6 713.6L509.9 715.1L511.3 716.4L512.7 717.7L514.3 718.8L515.9 719.7L517.6 720.5L519.3 721.2L521 721.8L522.7 722.2L524.5 722.5L526.3 722.7L528 722.7L529.7 722.7L531.4 722.5L531.4 719.9L529.9 719.6L528.5 719.2L527.1 718.7L525.8 718.1L524.5 717.4L523.4 716.6L522.3 715.7L521.2 714.8L520.3 713.8L519.4 712.8L518.7 711.7L518 710.6L517.3 709.5L516.8 708.4L516.3 707.2L515.9 706.1L515.6 704.9L515.3 703.7L515.1 702.5L515 701.4L514.9 700.2L514.8 698.8Z"/><path d="M531.4 722.5L533.1 722.5L534.7 722.4L536.4 722.1L538 721.7L539.6 721.2L541.1 720.6L542.6 719.9L544.1 719.1L545.5 718.1L546.8 717.1L548 716L549.2 714.8L550.3 713.5L551.3 712.2L552.2 710.8L552.9 709.3L553.6 707.7L554.2 706.1L554.6 704.5L555 702.9L555.2 701.2L555.3 699.5L555.3 697.9L555.1 696.2L554.9 694.5L554.5 692.9L554 691.3L553.4 689.7L552.7 688.2L551.9 686.7L551 685.4L548.2 687.2L549 688.4L549.7 689.7L550.3 691L550.8 692.4L551.2 693.7L551.5 695.2L551.8 696.6L551.9 698L551.9 699.5L551.8 700.9L551.6 702.3L551.4 703.7L551 705.1L550.5 706.5L549.9 707.8L549.3 709.1L548.5 710.4L547.7 711.5L546.8 712.7L545.8 713.7L544.7 714.7L543.6 715.6L542.4 716.5L541.2 717.2L539.9 717.9L538.5 718.5L537.2 718.9L535.8 719.3L534.3 719.6L532.9 719.8L531.4 719.9Z"/><path d="M489 680.5L487.5 679.8L485.9 679.2L484.2 678.7L482.5 678.3L480.7 678.1L479 678L477.2 678L475.4 678L473.7 678L471.9 678.1L470.1 678.2L468.3 678.4L466.5 678.7L464.7 679.1L462.9 679.6L461.2 680.3L459.5 681.1L457.9 682L456.3 683L454.8 684.1L453.5 685.4L452.2 686.8L451 688.3L450 689.8L449.1 691.5L448.4 693.3L447.9 695.1L447.5 697L447.3 698.8L447.3 700.8L447.5 702.6L447.9 704.5L448.4 706.3L449.1 708.1L450 709.8L451 711.3L452.2 712.8L453.5 714.2L454.8 715.5L456.3 716.6L457.9 717.6L459.5 718.5L461.2 719.3L462.9 720L464.7 720.5L466.5 721L468.2 721.3L470.1 721.5L471.9 721.7L473.6 721.7L475.4 721.7L477.2 721.6L477.2 719.6L475.6 719.4L474 719.1L472.4 718.6L470.9 718.1L469.5 717.4L468.1 716.6L466.8 715.8L465.6 714.9L464.5 713.9L463.5 712.9L462.6 711.9L461.8 710.8L461.1 709.7L460.5 708.7L460 707.6L459.5 706.5L459.1 705.4L458.9 704.4L458.6 703.3L458.5 702.3L458.4 701.3L458.3 700.3L458.3 699.3L458.4 698.3L458.5 697.3L458.6 696.3L458.9 695.2L459.1 694.2L459.5 693.1L460 692L460.5 690.9L461.1 689.9L461.8 688.8L462.6 687.7L463.5 686.7L464.5 685.7L465.6 684.7L466.8 683.8L468.1 682.9L469.4 682.1L470.9 681.4L472.4 680.8L473.9 680.4L475.6 680.1L477.2 680L478.8 680.1L480.5 680.3L482.1 680.6L483.6 680.9L485.2 681.4L486.7 681.8L488.3 682.4Z"/><path d="M477.2 721.6L479 721.6L480.8 721.5L482.6 721.2L484.4 720.9L486.1 720.4L487.8 719.8L489.4 719.1L491 718.4L492.5 717.5L494 716.5L495.3 715.5L496.6 714.3L497.8 713.1L498.8 711.8L499.8 710.5L500.6 709L501.3 707.6L501.9 706.1L502.4 704.5L502.7 703L500 702.4L499.7 703.8L499.3 705.2L498.8 706.5L498.2 707.7L497.5 709L496.7 710.2L495.8 711.4L494.7 712.5L493.6 713.5L492.4 714.5L491.2 715.4L489.8 716.2L488.4 716.9L486.9 717.6L485.4 718.2L483.8 718.6L482.2 719L480.5 719.3L478.9 719.5L477.2 719.6Z"/><path d="M488.1 682.2L489 682.9L489.8 683.5L490.5 684.2L491.1 684.9L491.6 685.6L492 686.3L492.3 687.1L492.6 687.9L492.7 688.6L492.8 689.4L492.8 690.3L492.8 691.1L492.6 691.9L492.4 692.7L492.1 693.5L491.6 694.4L494.4 695.6L494.8 694.6L495.1 693.5L495.4 692.4L495.5 691.3L495.5 690.3L495.4 689.2L495.2 688.1L495 687.1L494.6 686.1L494.1 685.2L493.5 684.3L492.8 683.4L492 682.6L491.1 681.8L490.2 681.2L489.1 680.6Z"/><path d="M496.1 695.4L495.8 696.9L495 698.1L493.8 698.9L492.3 699.2L490.8 698.9L489.6 698.1L488.8 696.9L488.5 695.4L488.8 693.9L489.6 692.7L490.8 691.9L492.3 691.6L493.8 691.9L495 692.7L495.8 693.9Z"/><path d="M541.8 652.5L549.8 639.2L551.5 639.2L551.5 695L541.8 695Z"/><path d="M528.5 653.6L542.7 649.8L542.3 648.2L528.1 652Z"/><path d="M529.8 694.6L542 694.6L542 693.1L529.8 693.1Z"/><path d="M546.6 665.5L547.2 663.7L547.8 662L548.5 660.4L549.3 658.8L550.1 657.3L551 655.8L552 654.5L553 653.2L554.1 652L555.2 650.9L556.3 649.8L557.5 648.8L558.7 648L560 647.2L561.3 646.5L562.7 646L564.1 645.5L565.5 645.2L566.9 645L568.4 645.1L569.8 645.3L571.2 645.8L572.6 646.3L573.8 647.1L575 648L576.1 649L577.1 650L578 651.1L578.9 652.3L579.7 653.6L580.4 654.9L581 656.3L581.6 657.7L582.1 659.1L582.5 660.6L582.9 662.1L583.2 663.6L583.5 665.1L583.6 666.7L583.8 668.3L583.8 670L595.1 669.2L594.9 667.1L594.5 665L594 662.8L593.4 660.7L592.6 658.7L591.6 656.8L590.5 654.9L589.3 653.2L588 651.6L586.6 650.1L585.2 648.8L583.6 647.5L582 646.5L580.3 645.5L578.7 644.8L576.9 644.2L575.2 643.7L573.5 643.4L571.8 643.2L570.2 643L568.5 643L566.9 643L565.2 643.1L563.6 643.3L562 643.6L560.3 644L558.7 644.6L557.2 645.4L555.7 646.2L554.2 647.3L552.9 648.5L551.6 649.7L550.4 651.2L549.4 652.7L548.4 654.3L547.6 656L546.9 657.8L546.3 659.6L545.9 661.5L545.5 663.4L545.3 665.3Z"/><path d="M583.7 668L595 668L595 721L583.7 721Z"/><path d="M576 721.6L604.7 721.6L604.7 720L576 720Z"/><path d="M592.3 665.5L592.8 663.7L593.4 662L594 660.3L594.8 658.7L595.6 657.2L596.4 655.8L597.3 654.4L598.3 653.1L599.3 651.9L600.4 650.7L601.4 649.7L602.6 648.7L603.7 647.9L604.9 647.1L606.2 646.5L607.5 645.9L608.8 645.5L610.1 645.2L611.5 645L612.8 645L614.2 645.3L615.5 645.7L616.8 646.3L617.9 647L619.1 647.8L620.1 648.8L621.1 649.8L622 650.9L622.8 652L623.6 653.3L624.3 654.6L624.9 655.9L625.5 657.3L626 658.8L626.4 660.3L626.8 661.8L627.1 663.4L627.4 665L627.6 666.6L627.7 668.2L627.8 669.9L637.8 669.3L637.6 667.2L637.3 665.1L636.8 663L636.2 661L635.4 659L634.6 657.1L633.6 655.3L632.5 653.5L631.3 651.9L630 650.4L628.6 649.1L627.2 647.8L625.7 646.7L624.1 645.8L622.6 645L620.9 644.3L619.3 643.8L617.7 643.5L616.1 643.2L614.5 643.1L613 643L611.4 643L609.9 643.1L608.3 643.3L606.7 643.6L605.2 644.1L603.7 644.7L602.2 645.5L600.8 646.4L599.5 647.4L598.2 648.6L597 649.9L595.9 651.3L594.9 652.8L594 654.4L593.2 656.1L592.5 657.8L592 659.6L591.5 661.5L591.2 663.4L591 665.3Z"/><path d="M628 668L637.6 668L637.6 721L628 721Z"/><path d="M617.4 721.6L647.4 721.6L647.4 720L617.4 720Z"/><path d="M703.6 640.7L703.6 670.6L705.2 670.6L705.2 640.7Z"/><path d="M704.7 661.9L704.4 659.7L704 657.6L703.5 655.6L702.7 653.8L701.8 652.1L700.8 650.6L699.6 649.2L698.3 648L696.9 646.9L695.3 645.9L693.7 645.1L691.9 644.4L690.1 643.9L688.1 643.5L686.1 643.3L684 643.2L681.5 643L679.1 643L676.7 643.1L674.4 643.4L672.2 643.8L670 644.5L668 645.3L666 646.3L664.1 647.5L662.4 648.9L660.8 650.5L659.4 652.3L658.2 654.4L657.3 656.6L656.6 659L656.2 662L657 666.1L659 670L661.9 673.2L665.2 676L668.8 678.5L672.7 680.9L676.8 683.2L680.8 685.4L684.9 687.6L688.7 689.7L692.2 691.8L695.1 693.9L697.4 695.9L699 697.7L699.8 699.2L700.1 700.9L700.3 702.1L700.3 703.7L700.2 705.2L699.9 706.8L699.4 708.3L698.7 709.8L697.9 711.2L696.8 712.6L695.6 713.9L694.2 715.1L692.6 716.3L690.9 717.3L688.9 718.2L686.8 718.9L684.5 719.4L682 719.8L679.5 719.7L677 719.4L674.6 718.9L672.3 718.3L670.1 717.4L668 716.4L666 715.3L664.2 713.9L662.4 712.5L660.9 710.8L659.5 709.1L658.2 707.2L657.2 705.2L656.3 703L655.6 700.7L655.2 698.3L653.2 698.7L653.7 701.2L654.4 703.7L655.3 706L656.4 708.2L657.8 710.3L659.3 712.2L661 714L662.9 715.6L664.9 717L667 718.3L669.3 719.4L671.7 720.3L674.1 721L676.7 721.6L679.3 721.9L682 722L684.7 722.2L687.3 722.1L689.8 721.8L692.3 721.4L694.7 720.7L697 719.8L699.1 718.7L701.2 717.4L703.1 716L704.8 714.3L706.4 712.4L707.7 710.3L708.9 708.1L709.8 705.7L710.5 703.2L710.9 700.1L710.2 695.8L708.3 691.7L705.5 688.2L702.2 685.1L698.6 682.3L694.6 679.8L690.6 677.4L686.5 675.1L682.4 672.9L678.5 670.8L675.1 668.8L672.1 666.8L669.8 664.9L668.3 663.3L667.6 662.2L667.4 661L667.2 660.2L667.2 658.9L667.2 657.6L667.5 656.4L667.9 655.2L668.4 654L669.1 652.8L670.1 651.6L671.2 650.5L672.5 649.5L674 648.5L675.7 647.7L677.5 646.9L679.5 646.3L681.7 645.8L684 645.4L686 645.4L687.8 645.6L689.6 645.9L691.3 646.3L692.9 646.9L694.5 647.6L695.9 648.4L697.2 649.3L698.4 650.4L699.5 651.6L700.4 653L701.3 654.5L702 656.2L702.6 658L703 659.9L703.3 662.1Z"/><path d="M659.6 698.2L659.3 699.5L658.6 700.5L657.6 701.2L656.3 701.5L655 701.2L654 700.5L653.3 699.5L653 698.2L653.3 696.9L654 695.9L655 695.2L656.3 694.9L657.6 695.2L658.6 695.9L659.3 696.9Z"/></g></svg>
<div class="lbl" style="left:304px;top:61px;font-size:20px">X:</div>
<div class="lbl" style="left:304px;top:85px;font-size:20px">Y:</div>
<div class="abs" style="left:300px;top:124px;width:108px;height:2px;background:#3b3b3d"></div>
<div class="lbl" style="left:304px;top:137px;font-size:20px">W:</div>
<div class="lbl" style="left:304px;top:161px;font-size:20px">H:</div>
<div class="abs" style="left:0;top:250px;width:440px;height:2px;background:#3d3d3f"></div>
<svg class="abs" style="left:23px;top:274px" width="22" height="13" viewBox="0 0 22 13"><path d="M0 12L6 5L9 8L13 1L22 12Z" fill="#e6e6e6"/></svg>
<div class="track" style="left:60px;top:264px;width:198px;height:24px"></div>
<div class="thumb" style="left:60px;top:264px;width:18px;height:24px"></div>
<svg class="abs" style="left:263px;top:266px" width="38" height="21" viewBox="0 0 38 21"><path d="M1 20L10 9L13 11L7 20Z M9 20L24 1L37 20Z" fill="#e6e6e6"/></svg>
<div class="inp" style="left:322px;top:258px;width:72px;height:40px;line-height:37px;padding-left:8px;font-size:22px">29</div>
<div class="lbl" style="left:402px;top:264.5px;font-size:22.5px;transform:scaleX(.68);transform-origin:0 0">%</div>
</div>

<!-- LAYERS -->
<div class="panel" id="lay" style="left:1396px;top:427px;width:440px;height:343px">
<div class="phead" style="height:35px;line-height:29px">Layers</div>
<svg class="x" style="left:412px;top:11px" width="12" height="12" viewBox="0 0 12 12"><g shape-rendering="crispEdges"><rect x="0" y="0" width="2" height="2" fill="#fff"/><rect x="2" y="0" width="2" height="2" fill="#9c9c9c"/><rect x="8" y="0" width="2" height="2" fill="#9c9c9c"/><rect x="10" y="0" width="2" height="2" fill="#fff"/><rect x="0" y="2" width="2" height="2" fill="#9c9c9c"/><rect x="2" y="2" width="2" height="2" fill="#fff"/><rect x="4" y="2" width="2" height="2" fill="#9c9c9c"/><rect x="6" y="2" width="2" height="2" fill="#9c9c9c"/><rect x="8" y="2" width="2" height="2" fill="#fff"/><rect x="10" y="2" width="2" height="2" fill="#9c9c9c"/><rect x="2" y="4" width="2" height="2" fill="#9c9c9c"/><rect x="4" y="4" width="2" height="2" fill="#fff"/><rect x="6" y="4" width="2" height="2" fill="#fff"/><rect x="8" y="4" width="2" height="2" fill="#9c9c9c"/><rect x="2" y="6" width="2" height="2" fill="#9c9c9c"/><rect x="4" y="6" width="2" height="2" fill="#fff"/><rect x="6" y="6" width="2" height="2" fill="#fff"/><rect x="8" y="6" width="2" height="2" fill="#9c9c9c"/><rect x="0" y="8" width="2" height="2" fill="#9c9c9c"/><rect x="2" y="8" width="2" height="2" fill="#fff"/><rect x="4" y="8" width="2" height="2" fill="#9c9c9c"/><rect x="6" y="8" width="2" height="2" fill="#9c9c9c"/><rect x="8" y="8" width="2" height="2" fill="#fff"/><rect x="10" y="8" width="2" height="2" fill="#9c9c9c"/><rect x="0" y="10" width="2" height="2" fill="#fff"/><rect x="2" y="10" width="2" height="2" fill="#9c9c9c"/><rect x="8" y="10" width="2" height="2" fill="#9c9c9c"/><rect x="10" y="10" width="2" height="2" fill="#fff"/></g></svg>
<div class="abs" style="left:8px;top:37px;width:392px;height:80px;background:#62bed6"></div>
<div class="abs" style="left:400px;top:37px;width:32px;height:138px;background:#404042"></div>
<div class="abs" id="lthumb1" style="left:20px;top:45px;width:44px;height:64px;border:2px solid #fff;background:#000;padding:2px"><div style="width:36px;height:56px;background-color:#fff;background-image:linear-gradient(45deg,#ccc 25%,transparent 25%,transparent 75%,#ccc 75%),linear-gradient(45deg,#ccc 25%,transparent 25%,transparent 75%,#ccc 75%);background-size:16px 16px;background-position:4px 0,12px 8px"></div></div>
<div class="lbl" style="left:76px;top:50px;font-size:20px;letter-spacing:-0.3px">Layer 1</div>
<div class="abs" style="left:364px;top:55px;width:22px;height:22px;background:#151515;border:1px solid #000"></div>
<svg class="abs" style="left:364px;top:47px" width="30" height="30" viewBox="0 0 30 30"><path d="M4 15L10.5 22.5L23 4" stroke="#fff" stroke-width="2.6" fill="none"/></svg>
<div class="abs" style="left:20px;top:125px;width:44px;height:50px;border:2px solid #fff;border-bottom:none;background:#000"></div>
<div class="lbl" style="left:76px;top:130px;font-size:20px;letter-spacing:-0.8px">Background</div>
<svg class="abs" id="lock" style="left:374px;top:139px" width="16" height="20" viewBox="0 0 16 20"><path d="M4 9V5.5a4 4 0 0 1 8 0V9" stroke="#d8d8d8" stroke-width="2.4" fill="none"/><rect x="0" y="8" width="16" height="12" fill="#e2e2e2"/><rect x="6" y="11" width="4" height="2" fill="#777"/><rect x="6" y="15" width="4" height="2" fill="#777"/></svg>
<svg class="abs" style="left:407px;top:47px" width="18" height="9" viewBox="0 0 18 9"><path d="M0 9L9 0L18 9Z" fill="#6c6c6c"/></svg>
<div class="abs" style="left:406px;top:70px;width:20px;height:49px;border-radius:10px;background:#6f6f6f"></div>
<svg class="abs" style="left:407px;top:155px" width="18" height="9" viewBox="0 0 18 9"><path d="M0 0L9 9L18 0Z" fill="#6c6c6c"/></svg>
<div class="abs" style="left:0;top:176px;width:440px;height:2px;background:#3d3d3f"></div>
<div class="lbl" style="left:74px;top:193px;font-size:20px">Opacity:</div>
<div class="track" style="left:164px;top:193px;width:176px;height:24px"></div>
<div class="thumb" style="left:322px;top:193px;width:18px;height:24px"></div>
<div class="inp" style="left:350px;top:190px;width:66px;height:32px;line-height:31px;padding-left:9px;font-size:18px">100</div>
<div class="lbl" style="left:96px;top:249px;font-size:20px">Mode:</div>
<div class="inp" style="left:160px;top:241px;width:214px;height:39px;line-height:38px;padding-left:8px;font-size:19px;letter-spacing:.95px">Normal</div>
<svg class="abs" style="left:384px;top:259px" width="14" height="8" viewBox="0 0 14 8"><path d="M0 0H14L7 8Z" fill="#fff"/></svg>
<div class="abs" style="left:0;top:285px;width:440px;height:2px;background:#3d3d3f"></div>
<!-- bottom icons -->
<svg class="abs" style="left:30px;top:298px" width="24" height="29" viewBox="0 0 24 29"><rect width="24" height="29" fill="#e4e4e4"/><path d="M2 9H22M2 20H22" stroke="#444" stroke-width="2"/><rect x="6" y="6" width="4" height="6" fill="#444"/><rect x="13" y="17" width="4" height="6" fill="#444"/></svg>
<svg class="abs" style="left:96px;top:298px" width="36" height="29" viewBox="0 0 36 29"><rect width="36" height="29" fill="#e4e4e4"/><circle cx="18" cy="14.5" r="10.5" fill="#444446"/></svg>
<svg class="abs" style="left:138px;top:294px" width="37" height="33" viewBox="0 0 37 33"><path d="M0 4H14L10 14L20 18L26 28L32 22V33H0Z" fill="#e4e4e4"/><path d="M26 0L28.5 5L34 3L32 8.5L37 11L32 13.5L34 19L28.5 17L26 22L23.5 17L18 19L20 13.5L15 11L20 8.5L18 3L23.5 5Z" fill="#e4e4e4"/></svg>
<svg class="abs" style="left:324px;top:297px" width="24" height="32" viewBox="0 0 24 32"><path d="M1 0H24V32H14V20H1Z" fill="#e4e4e4"/><path d="M1 22H12V32Z" fill="#9a9a9a"/></svg>
<svg class="abs" id="trash" style="left:366px;top:297px" width="24" height="32" viewBox="0 0 24 32"><path d="M7 5V2.5a1.5 1.5 0 0 1 1.500 -1.500h7a1.500 1.500 0 0 1 1.500 1.500V5" stroke="#e4e4e4" stroke-width="2.400" fill="none"/><rect x="0" y="5" width="24" height="5" rx="2" fill="#e4e4e4"/><path d="M2 12H22V29a3 3 0 0 1 -3 3H5a3 3 0 0 1 -3 -3Z" fill="#e4e4e4"/><path d="M7 14V28M12 14V28M17 14V28" stroke="#48484a" stroke-width="2.200"/></svg>
<svg class="abs" style="left:408px;top:305px" width="20" height="20" viewBox="0 0 20 20"><path d="M0 0H12L0 12Z M20 6V20H6Z" fill="#7c7c7c"/></svg>
</div>

<!-- HISTORY -->
<div class="panel" id="his" style="left:1396px;top:780px;width:440px;height:338px">
<div class="abs" id="hlist" style="left:0;top:0;width:440px;height:284px;overflow:hidden">
<svg class="abs" style="left:24px;top:32px" width="38" height="40" viewBox="0 0 38 40"><rect x="1" y="0" width="18" height="4" fill="#bdbdbd"/><rect x="1" y="4" width="26" height="25" fill="#f4f4f4"/><rect x="0" y="29" width="27" height="2" fill="#333" opacity=".5"/><path d="M4 10H21M4 15.500H21M4 21H21" stroke="#3a3a3a" stroke-width="2.200"/><path d="M19.500 14.500L35.500 25L26.500 27.500L21.500 35.800Z" fill="#8a8a8a" stroke="#ececec" stroke-width="1.600"/></svg>
<div class="lbl" style="left:68px;top:35px;font-size:20px;letter-spacing:-0.5px;color:#38383a">New image</div>
<svg class="abs" id="bucketh" style="left:25px;top:84px" width="34" height="34" viewBox="0 0 34 34"><path d="M3 10C3 2 12 1 13 8" stroke="#9a9a9a" stroke-width="2.200" fill="none"/><path d="M1 18L17 3L30 14L14 31Z" fill="#ececec"/><path d="M17 3C28 4 35 14 33 28C30 22 28 19 26 18L30 14Z" fill="#dcdcdc"/><circle cx="15" cy="13" r="2.200" fill="#555"/></svg>
<div class="lbl" style="left:68px;top:87px;font-size:20px;color:#38383a">Paint bucket tool</div>
<svg class="abs" style="left:24px;top:136px" width="38" height="40" viewBox="0 0 38 40"><rect x="1" y="0" width="18" height="4" fill="#bdbdbd"/><rect x="1" y="4" width="26" height="25" fill="#f4f4f4"/><rect x="0" y="29" width="27" height="2" fill="#333" opacity=".5"/><path d="M4 10H21M4 15.500H21M4 21H21" stroke="#3a3a3a" stroke-width="2.200"/><path d="M19.500 14.500L35.500 25L26.500 27.500L21.500 35.800Z" fill="#8a8a8a" stroke="#ececec" stroke-width="1.600"/></svg>
<div class="lbl" style="left:68px;top:139px;font-size:20px;color:#38383a">New layer</div>
<svg class="abs" style="left:24px;top:188px" width="38" height="40" viewBox="0 0 38 40"><rect x="1" y="0" width="18" height="4" fill="#bdbdbd"/><rect x="1" y="4" width="26" height="25" fill="#f4f4f4"/><rect x="0" y="29" width="27" height="2" fill="#333" opacity=".5"/><path d="M4 10H21M4 15.500H21M4 21H21" stroke="#3a3a3a" stroke-width="2.200"/><path d="M19.500 14.500L35.500 25L26.500 27.500L21.500 35.800Z" fill="#8a8a8a" stroke="#ececec" stroke-width="1.600"/></svg>
<div class="lbl" style="left:68px;top:191px;font-size:20px;color:#38383a">Free transform</div>
<div class="abs" style="left:8px;top:232px;width:392px;height:52px;background:#62bed6"></div>
<svg class="abs" style="left:24px;top:240px" width="38" height="40" viewBox="0 0 38 40"><rect x="1" y="0" width="18" height="4" fill="#bdbdbd"/><rect x="1" y="4" width="26" height="25" fill="#f4f4f4"/><rect x="0" y="29" width="27" height="2" fill="#333" opacity=".5"/><path d="M4 10H21M4 15.500H21M4 21H21" stroke="#3a3a3a" stroke-width="2.200"/><path d="M19.500 14.500L35.500 25L26.500 27.500L21.500 35.800Z" fill="#3c3c3c" stroke="#ececec" stroke-width="1.600"/></svg>
<div class="lbl" style="left:68px;top:243px;font-size:20px;color:#fff">Free transform</div>

<div class="abs" style="left:400px;top:34px;width:32px;height:250px;background:#404042"></div>
<svg class="abs" style="left:407px;top:46px" width="18" height="9" viewBox="0 0 18 9"><path d="M0 9L9 0L18 9Z" fill="#6c6c6c"/></svg>
<div class="abs" style="left:406px;top:81px;width:20px;height:169px;border-radius:10px;background:#6f6f6f"></div>
<svg class="abs" style="left:407px;top:264px" width="18" height="9" viewBox="0 0 18 9"><path d="M0 0L9 9L18 0Z" fill="#6c6c6c"/></svg>
</div>
<div class="phead" style="height:33px;line-height:27px">History</div>
<svg class="x" style="left:412px;top:10px" width="12" height="12" viewBox="0 0 12 12"><g shape-rendering="crispEdges"><rect x="0" y="0" width="2" height="2" fill="#fff"/><rect x="2" y="0" width="2" height="2" fill="#9c9c9c"/><rect x="8" y="0" width="2" height="2" fill="#9c9c9c"/><rect x="10" y="0" width="2" height="2" fill="#fff"/><rect x="0" y="2" width="2" height="2" fill="#9c9c9c"/><rect x="2" y="2" width="2" height="2" fill="#fff"/><rect x="4" y="2" width="2" height="2" fill="#9c9c9c"/><rect x="6" y="2" width="2" height="2" fill="#9c9c9c"/><rect x="8" y="2" width="2" height="2" fill="#fff"/><rect x="10" y="2" width="2" height="2" fill="#9c9c9c"/><rect x="2" y="4" width="2" height="2" fill="#9c9c9c"/><rect x="4" y="4" width="2" height="2" fill="#fff"/><rect x="6" y="4" width="2" height="2" fill="#fff"/><rect x="8" y="4" width="2" height="2" fill="#9c9c9c"/><rect x="2" y="6" width="2" height="2" fill="#9c9c9c"/><rect x="4" y="6" width="2" height="2" fill="#fff"/><rect x="6" y="6" width="2" height="2" fill="#fff"/><rect x="8" y="6" width="2" height="2" fill="#9c9c9c"/><rect x="0" y="8" width="2" height="2" fill="#9c9c9c"/><rect x="2" y="8" width="2" height="2" fill="#fff"/><rect x="4" y="8" width="2" height="2" fill="#9c9c9c"/><rect x="6" y="8" width="2" height="2" fill="#9c9c9c"/><rect x="8" y="8" width="2" height="2" fill="#fff"/><rect x="10" y="8" width="2" height="2" fill="#9c9c9c"/><rect x="0" y="10" width="2" height="2" fill="#fff"/><rect x="2" y="10" width="2" height="2" fill="#9c9c9c"/><rect x="8" y="10" width="2" height="2" fill="#9c9c9c"/><rect x="10" y="10" width="2" height="2" fill="#fff"/></g></svg>
<div class="abs" style="left:0;top:284px;width:440px;height:2px;background:#3d3d3f"></div>
<svg class="abs" style="left:408px;top:306px" width="20" height="20" viewBox="0 0 20 20"><path d="M0 0H12L0 12Z M20 6V20H6Z" fill="#7c7c7c"/></svg>
</div>

</div>
</body>
</html>
